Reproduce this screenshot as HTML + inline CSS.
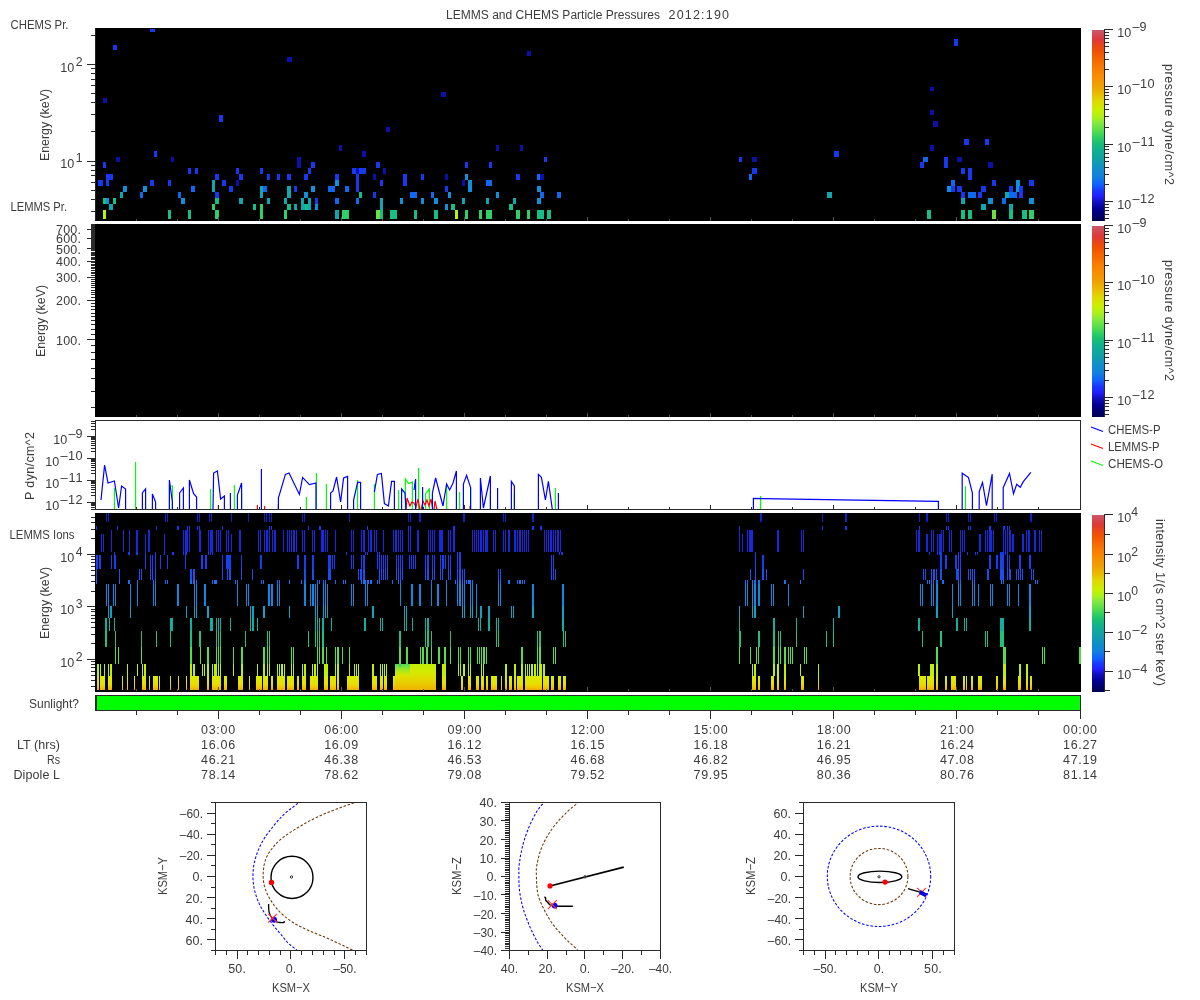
<!DOCTYPE html><html><head><meta charset="utf-8"><style>html,body{margin:0;padding:0;background:#fff;overflow:hidden}svg{display:block;will-change:transform}</style></head><body><svg width="1200" height="1000" viewBox="0 0 1200 1000" font-family='"Liberation Sans", sans-serif' shape-rendering="crispEdges">
<rect x="0" y="0" width="1200" height="1000" fill="#fff"/>
<text x="446" y="19" font-size="12.5" textLength="214" lengthAdjust="spacingAndGlyphs" fill="#3c3c3c">LEMMS and CHEMS Particle Pressures</text>
<text x="668.5" y="19" font-size="12.5" textLength="60.5" lengthAdjust="spacing" fill="#3c3c3c">2012:190</text>
<rect x="95" y="28" width="986" height="193" fill="#000"/>
<rect x="95" y="28" width="1" height="193" fill="#222"/>
<rect x="91" y="211" width="4" height="1" fill="#2a2a2a"/>
<rect x="91" y="199" width="4" height="1" fill="#2a2a2a"/>
<rect x="91" y="190" width="4" height="1" fill="#2a2a2a"/>
<rect x="91" y="182" width="4" height="1" fill="#2a2a2a"/>
<rect x="91" y="175" width="4" height="1" fill="#2a2a2a"/>
<rect x="91" y="170" width="4" height="1" fill="#2a2a2a"/>
<rect x="91" y="165" width="4" height="1" fill="#2a2a2a"/>
<rect x="91" y="131" width="4" height="1" fill="#2a2a2a"/>
<rect x="91" y="114" width="4" height="1" fill="#2a2a2a"/>
<rect x="91" y="102" width="4" height="1" fill="#2a2a2a"/>
<rect x="91" y="93" width="4" height="1" fill="#2a2a2a"/>
<rect x="91" y="85" width="4" height="1" fill="#2a2a2a"/>
<rect x="91" y="79" width="4" height="1" fill="#2a2a2a"/>
<rect x="91" y="73" width="4" height="1" fill="#2a2a2a"/>
<rect x="91" y="68" width="4" height="1" fill="#2a2a2a"/>
<rect x="91" y="35" width="4" height="1" fill="#2a2a2a"/>
<rect x="87" y="161" width="8" height="1" fill="#2a2a2a"/>
<rect x="87" y="64" width="8" height="1" fill="#2a2a2a"/>
<rect x="103" y="210" width="3" height="9" fill="#b8f018"/>
<rect x="168" y="210" width="3" height="9" fill="#14c088"/>
<rect x="188" y="210" width="3" height="9" fill="#14c088"/>
<rect x="109" y="204" width="4" height="6" fill="#10a8b0"/>
<rect x="103" y="198" width="3" height="6" fill="#14c088"/>
<rect x="106" y="198" width="3" height="6" fill="#1090d8"/>
<rect x="113" y="198" width="3" height="6" fill="#14c088"/>
<rect x="181" y="198" width="4" height="6" fill="#1090d8"/>
<rect x="120" y="192" width="3" height="6" fill="#10a8b0"/>
<rect x="140" y="192" width="3" height="6" fill="#1068f0"/>
<rect x="178" y="192" width="3" height="6" fill="#1068f0"/>
<rect x="123" y="186" width="4" height="6" fill="#1090d8"/>
<rect x="143" y="186" width="4" height="6" fill="#1090d8"/>
<rect x="191" y="186" width="4" height="6" fill="#1068f0"/>
<rect x="98" y="180" width="5" height="6" fill="#1838f0"/>
<rect x="106" y="180" width="3" height="6" fill="#1838f0"/>
<rect x="150" y="180" width="4" height="6" fill="#1838f0"/>
<rect x="168" y="180" width="3" height="6" fill="#1838f0"/>
<rect x="106" y="174" width="7" height="6" fill="#1838f0"/>
<rect x="188" y="168" width="3" height="6" fill="#1838f0"/>
<rect x="103" y="162" width="3" height="6" fill="#1838f0"/>
<rect x="116" y="157" width="4" height="5" fill="#0c10a8"/>
<rect x="171" y="157" width="3" height="5" fill="#0c10a8"/>
<rect x="154" y="151" width="3" height="6" fill="#1838f0"/>
<rect x="215" y="210" width="4" height="9" fill="#30d068"/>
<rect x="260" y="210" width="3" height="9" fill="#30d068"/>
<rect x="284" y="210" width="3" height="9" fill="#30d068"/>
<rect x="212" y="204" width="3" height="6" fill="#30d068"/>
<rect x="253" y="204" width="3" height="6" fill="#14c088"/>
<rect x="260" y="204" width="3" height="6" fill="#30d068"/>
<rect x="287" y="204" width="4" height="6" fill="#14c088"/>
<rect x="294" y="204" width="3" height="6" fill="#10a8b0"/>
<rect x="301" y="204" width="3" height="6" fill="#10a8b0"/>
<rect x="304" y="204" width="4" height="6" fill="#10a8b0"/>
<rect x="308" y="204" width="3" height="6" fill="#10a8b0"/>
<rect x="215" y="198" width="4" height="6" fill="#14c088"/>
<rect x="239" y="198" width="4" height="6" fill="#10a8b0"/>
<rect x="267" y="198" width="3" height="6" fill="#10a8b0"/>
<rect x="284" y="198" width="3" height="6" fill="#10a8b0"/>
<rect x="301" y="198" width="3" height="6" fill="#10a8b0"/>
<rect x="308" y="198" width="3" height="6" fill="#10a8b0"/>
<rect x="215" y="192" width="4" height="6" fill="#1838f0"/>
<rect x="260" y="192" width="3" height="6" fill="#10a8b0"/>
<rect x="287" y="192" width="4" height="6" fill="#10a8b0"/>
<rect x="304" y="192" width="4" height="6" fill="#1090d8"/>
<rect x="212" y="186" width="3" height="6" fill="#10a8b0"/>
<rect x="229" y="186" width="4" height="6" fill="#1838f0"/>
<rect x="260" y="186" width="3" height="6" fill="#10a8b0"/>
<rect x="263" y="186" width="4" height="6" fill="#1068f0"/>
<rect x="287" y="186" width="4" height="6" fill="#10a8b0"/>
<rect x="294" y="186" width="3" height="6" fill="#1838f0"/>
<rect x="212" y="180" width="3" height="6" fill="#10a8b0"/>
<rect x="222" y="180" width="4" height="6" fill="#1838f0"/>
<rect x="236" y="180" width="3" height="6" fill="#0c10a8"/>
<rect x="215" y="174" width="4" height="6" fill="#1838f0"/>
<rect x="239" y="174" width="4" height="6" fill="#1838f0"/>
<rect x="267" y="174" width="3" height="6" fill="#1838f0"/>
<rect x="277" y="174" width="3" height="6" fill="#1838f0"/>
<rect x="287" y="174" width="4" height="6" fill="#1838f0"/>
<rect x="304" y="174" width="4" height="6" fill="#1838f0"/>
<rect x="195" y="168" width="3" height="6" fill="#1838f0"/>
<rect x="236" y="168" width="3" height="6" fill="#1838f0"/>
<rect x="260" y="168" width="3" height="6" fill="#1838f0"/>
<rect x="308" y="168" width="3" height="6" fill="#1838f0"/>
<rect x="297" y="162" width="4" height="6" fill="#0c10a8"/>
<rect x="297" y="157" width="4" height="5" fill="#0c10a8"/>
<rect x="305" y="174" width="3" height="6" fill="#1838f0"/>
<rect x="305" y="192" width="3" height="6" fill="#1090d8"/>
<rect x="305" y="204" width="3" height="6" fill="#14c088"/>
<rect x="308" y="168" width="3" height="6" fill="#1838f0"/>
<rect x="308" y="198" width="3" height="6" fill="#10a8b0"/>
<rect x="311" y="162" width="4" height="6" fill="#1838f0"/>
<rect x="311" y="186" width="4" height="6" fill="#1090d8"/>
<rect x="315" y="198" width="3" height="6" fill="#1838f0"/>
<rect x="315" y="204" width="3" height="6" fill="#1090d8"/>
<rect x="328" y="186" width="7" height="6" fill="#1068f0"/>
<rect x="335" y="174" width="4" height="6" fill="#1838f0"/>
<rect x="335" y="180" width="4" height="6" fill="#1090d8"/>
<rect x="335" y="198" width="4" height="6" fill="#1068f0"/>
<rect x="335" y="210" width="4" height="9" fill="#10a8b0"/>
<rect x="339" y="145" width="3" height="6" fill="#0c10a8"/>
<rect x="342" y="210" width="7" height="9" fill="#30d068"/>
<rect x="345" y="186" width="4" height="6" fill="#1068f0"/>
<rect x="352" y="168" width="4" height="6" fill="#1838f0"/>
<rect x="356" y="168" width="3" height="6" fill="#0c10a8"/>
<rect x="356" y="174" width="3" height="6" fill="#1838f0"/>
<rect x="356" y="180" width="3" height="6" fill="#1838f0"/>
<rect x="356" y="186" width="3" height="6" fill="#1838f0"/>
<rect x="356" y="198" width="3" height="6" fill="#1068f0"/>
<rect x="359" y="192" width="3" height="6" fill="#14c088"/>
<rect x="359" y="168" width="7" height="6" fill="#1838f0"/>
<rect x="362" y="151" width="4" height="6" fill="#0c10a8"/>
<rect x="373" y="174" width="3" height="6" fill="#0c10a8"/>
<rect x="373" y="192" width="3" height="6" fill="#1838f0"/>
<rect x="376" y="162" width="4" height="6" fill="#1838f0"/>
<rect x="376" y="210" width="4" height="9" fill="#70e040"/>
<rect x="380" y="180" width="3" height="6" fill="#1838f0"/>
<rect x="380" y="198" width="3" height="6" fill="#10a8b0"/>
<rect x="380" y="204" width="3" height="6" fill="#10a8b0"/>
<rect x="380" y="210" width="3" height="9" fill="#14c088"/>
<rect x="383" y="168" width="3" height="6" fill="#0c10a8"/>
<rect x="390" y="210" width="7" height="9" fill="#14c088"/>
<rect x="400" y="198" width="3" height="6" fill="#1090d8"/>
<rect x="403" y="174" width="4" height="6" fill="#1838f0"/>
<rect x="403" y="180" width="4" height="6" fill="#1838f0"/>
<rect x="410" y="192" width="7" height="6" fill="#1068f0"/>
<rect x="414" y="210" width="3" height="9" fill="#14c088"/>
<rect x="421" y="174" width="3" height="6" fill="#1838f0"/>
<rect x="421" y="198" width="3" height="6" fill="#1090d8"/>
<rect x="431" y="192" width="3" height="6" fill="#1068f0"/>
<rect x="434" y="198" width="4" height="6" fill="#1090d8"/>
<rect x="434" y="210" width="4" height="9" fill="#14c088"/>
<rect x="445" y="174" width="3" height="6" fill="#0c10a8"/>
<rect x="445" y="186" width="3" height="6" fill="#1838f0"/>
<rect x="445" y="204" width="3" height="6" fill="#1090d8"/>
<rect x="448" y="192" width="3" height="6" fill="#1090d8"/>
<rect x="451" y="204" width="4" height="6" fill="#14c088"/>
<rect x="455" y="210" width="3" height="9" fill="#b8f018"/>
<rect x="462" y="180" width="3" height="6" fill="#0c10a8"/>
<rect x="462" y="198" width="3" height="6" fill="#10a8b0"/>
<rect x="465" y="162" width="3" height="6" fill="#1838f0"/>
<rect x="465" y="174" width="3" height="6" fill="#1090d8"/>
<rect x="465" y="210" width="3" height="9" fill="#30d068"/>
<rect x="468" y="180" width="4" height="6" fill="#1090d8"/>
<rect x="468" y="186" width="4" height="6" fill="#1090d8"/>
<rect x="479" y="210" width="3" height="9" fill="#30d068"/>
<rect x="486" y="180" width="6" height="6" fill="#1068f0"/>
<rect x="486" y="210" width="6" height="9" fill="#30d068"/>
<rect x="486" y="198" width="3" height="6" fill="#10a8b0"/>
<rect x="489" y="162" width="3" height="6" fill="#1838f0"/>
<rect x="496" y="145" width="3" height="6" fill="#0c10a8"/>
<rect x="496" y="192" width="3" height="6" fill="#1090d8"/>
<rect x="509" y="204" width="4" height="6" fill="#14c088"/>
<rect x="513" y="198" width="3" height="6" fill="#10a8b0"/>
<rect x="516" y="174" width="4" height="6" fill="#1838f0"/>
<rect x="516" y="210" width="4" height="9" fill="#30d068"/>
<rect x="520" y="145" width="3" height="6" fill="#0c10a8"/>
<rect x="527" y="210" width="3" height="9" fill="#30d068"/>
<rect x="537" y="174" width="4" height="6" fill="#1068f0"/>
<rect x="537" y="186" width="4" height="6" fill="#1090d8"/>
<rect x="537" y="198" width="4" height="6" fill="#1090d8"/>
<rect x="537" y="210" width="4" height="9" fill="#14c088"/>
<rect x="540" y="174" width="4" height="6" fill="#0c10a8"/>
<rect x="540" y="192" width="4" height="6" fill="#1068f0"/>
<rect x="540" y="210" width="4" height="9" fill="#14c088"/>
<rect x="544" y="157" width="3" height="5" fill="#1838f0"/>
<rect x="547" y="210" width="4" height="9" fill="#14c088"/>
<rect x="557" y="192" width="4" height="6" fill="#1068f0"/>
<rect x="739" y="157" width="3" height="5" fill="#1838f0"/>
<rect x="752" y="157" width="5" height="5" fill="#0c10a8"/>
<rect x="752" y="168" width="5" height="6" fill="#1838f0"/>
<rect x="749" y="174" width="3" height="6" fill="#1068f0"/>
<rect x="827" y="192" width="5" height="6" fill="#10a8b0"/>
<rect x="834" y="151" width="5" height="6" fill="#1838f0"/>
<rect x="920" y="162" width="4" height="6" fill="#1838f0"/>
<rect x="923" y="157" width="5" height="5" fill="#1068f0"/>
<rect x="927" y="210" width="4" height="9" fill="#14c088"/>
<rect x="930" y="145" width="4" height="6" fill="#0c10a8"/>
<rect x="944" y="157" width="4" height="5" fill="#1838f0"/>
<rect x="944" y="162" width="4" height="6" fill="#1838f0"/>
<rect x="947" y="186" width="5" height="6" fill="#1090d8"/>
<rect x="951" y="180" width="4" height="6" fill="#1068f0"/>
<rect x="951" y="186" width="4" height="6" fill="#1838f0"/>
<rect x="957" y="157" width="5" height="5" fill="#0c10a8"/>
<rect x="957" y="186" width="5" height="6" fill="#1838f0"/>
<rect x="961" y="168" width="4" height="6" fill="#1838f0"/>
<rect x="961" y="192" width="4" height="6" fill="#1838f0"/>
<rect x="961" y="198" width="4" height="6" fill="#10a8b0"/>
<rect x="961" y="210" width="4" height="9" fill="#14c088"/>
<rect x="964" y="139" width="5" height="6" fill="#1838f0"/>
<rect x="968" y="168" width="4" height="6" fill="#1838f0"/>
<rect x="968" y="174" width="4" height="6" fill="#1838f0"/>
<rect x="968" y="210" width="4" height="9" fill="#14c088"/>
<rect x="968" y="192" width="8" height="6" fill="#1068f0"/>
<rect x="978" y="192" width="4" height="6" fill="#1838f0"/>
<rect x="981" y="186" width="5" height="6" fill="#1838f0"/>
<rect x="981" y="204" width="5" height="6" fill="#10a8b0"/>
<rect x="985" y="139" width="4" height="6" fill="#1838f0"/>
<rect x="988" y="162" width="5" height="6" fill="#0c10a8"/>
<rect x="988" y="198" width="5" height="6" fill="#1090d8"/>
<rect x="992" y="180" width="4" height="6" fill="#1838f0"/>
<rect x="992" y="210" width="4" height="9" fill="#70e040"/>
<rect x="1002" y="198" width="4" height="6" fill="#1068f0"/>
<rect x="1005" y="192" width="5" height="6" fill="#10a8b0"/>
<rect x="1009" y="186" width="4" height="6" fill="#1838f0"/>
<rect x="1009" y="192" width="4" height="6" fill="#1068f0"/>
<rect x="1009" y="204" width="4" height="6" fill="#10a8b0"/>
<rect x="1009" y="210" width="4" height="9" fill="#14c088"/>
<rect x="1012" y="192" width="5" height="6" fill="#1068f0"/>
<rect x="1016" y="180" width="4" height="6" fill="#1090d8"/>
<rect x="1016" y="186" width="4" height="6" fill="#1090d8"/>
<rect x="1019" y="186" width="4" height="6" fill="#1838f0"/>
<rect x="1019" y="192" width="4" height="6" fill="#1838f0"/>
<rect x="1022" y="210" width="5" height="9" fill="#14c088"/>
<rect x="1029" y="180" width="5" height="6" fill="#1838f0"/>
<rect x="1029" y="198" width="5" height="6" fill="#1090d8"/>
<rect x="1029" y="210" width="5" height="9" fill="#30d068"/>
<rect x="150" y="29" width="5" height="3" fill="#1838f0"/>
<rect x="113" y="45" width="4" height="5" fill="#1838f0"/>
<rect x="287" y="57" width="5" height="5" fill="#0c10a8"/>
<rect x="103" y="98" width="4" height="5" fill="#0c10a8"/>
<rect x="219" y="115" width="4" height="7" fill="#1838f0"/>
<rect x="527" y="51" width="4" height="5" fill="#0c10a8"/>
<rect x="441" y="92" width="5" height="5" fill="#0c10a8"/>
<rect x="386" y="127" width="4" height="5" fill="#0c10a8"/>
<rect x="954" y="39" width="4" height="7" fill="#1838f0"/>
<rect x="930" y="87" width="4" height="4" fill="#0c10a8"/>
<rect x="930" y="110" width="4" height="5" fill="#0c10a8"/>
<rect x="933" y="121" width="5" height="6" fill="#0c10a8"/>
<text x="10.5" y="29" font-size="12.5" textLength="58" lengthAdjust="spacingAndGlyphs" fill="#3c3c3c">CHEMS Pr.</text>
<text x="10.5" y="211" font-size="12.5" textLength="56.5" lengthAdjust="spacingAndGlyphs" fill="#3c3c3c">LEMMS Pr.</text>
<defs>
<linearGradient id="cm" x1="0" y1="0" x2="0" y2="1"><stop offset="0" stop-color="#c85a6a"/><stop offset="0.052" stop-color="#e03838"/><stop offset="0.11" stop-color="#f05000"/><stop offset="0.19" stop-color="#f87800"/><stop offset="0.24" stop-color="#f88c00"/><stop offset="0.29" stop-color="#f0a000"/><stop offset="0.34" stop-color="#e8c000"/><stop offset="0.37" stop-color="#e0d800"/><stop offset="0.42" stop-color="#c8f000"/><stop offset="0.46" stop-color="#a8f020"/><stop offset="0.49" stop-color="#80e840"/><stop offset="0.52" stop-color="#60e048"/><stop offset="0.56" stop-color="#30d060"/><stop offset="0.59" stop-color="#18c070"/><stop offset="0.63" stop-color="#10b090"/><stop offset="0.68" stop-color="#10a0a8"/><stop offset="0.72" stop-color="#1090c8"/><stop offset="0.77" stop-color="#1080e0"/><stop offset="0.81" stop-color="#1060ff"/><stop offset="0.84" stop-color="#1838ff"/><stop offset="0.87" stop-color="#2020ff"/><stop offset="0.9" stop-color="#1010c0"/><stop offset="0.94" stop-color="#000090"/><stop offset="1" stop-color="#000050"/></linearGradient>
</defs>
<rect x="1092" y="30" width="12" height="191" fill="url(#cm)"/>
<rect x="1104" y="29" width="1" height="192" fill="#2a2a2a"/>
<rect x="1105" y="218" width="4" height="1" fill="#2a2a2a"/>
<rect x="1105" y="214" width="4" height="1" fill="#2a2a2a"/>
<rect x="1105" y="210" width="4" height="1" fill="#2a2a2a"/>
<rect x="1105" y="207" width="4" height="1" fill="#2a2a2a"/>
<rect x="1105" y="204" width="4" height="1" fill="#2a2a2a"/>
<rect x="1105" y="201" width="8" height="1" fill="#2a2a2a"/>
<rect x="1105" y="184" width="4" height="1" fill="#2a2a2a"/>
<rect x="1105" y="174" width="4" height="1" fill="#2a2a2a"/>
<rect x="1105" y="167" width="4" height="1" fill="#2a2a2a"/>
<rect x="1105" y="161" width="4" height="1" fill="#2a2a2a"/>
<rect x="1105" y="157" width="4" height="1" fill="#2a2a2a"/>
<rect x="1105" y="153" width="4" height="1" fill="#2a2a2a"/>
<rect x="1105" y="149" width="4" height="1" fill="#2a2a2a"/>
<rect x="1105" y="146" width="4" height="1" fill="#2a2a2a"/>
<rect x="1105" y="144" width="8" height="1" fill="#2a2a2a"/>
<rect x="1105" y="127" width="4" height="1" fill="#2a2a2a"/>
<rect x="1105" y="116" width="4" height="1" fill="#2a2a2a"/>
<rect x="1105" y="109" width="4" height="1" fill="#2a2a2a"/>
<rect x="1105" y="104" width="4" height="1" fill="#2a2a2a"/>
<rect x="1105" y="99" width="4" height="1" fill="#2a2a2a"/>
<rect x="1105" y="95" width="4" height="1" fill="#2a2a2a"/>
<rect x="1105" y="92" width="4" height="1" fill="#2a2a2a"/>
<rect x="1105" y="89" width="4" height="1" fill="#2a2a2a"/>
<rect x="1105" y="86" width="8" height="1" fill="#2a2a2a"/>
<rect x="1105" y="69" width="4" height="1" fill="#2a2a2a"/>
<rect x="1105" y="59" width="4" height="1" fill="#2a2a2a"/>
<rect x="1105" y="52" width="4" height="1" fill="#2a2a2a"/>
<rect x="1105" y="46" width="4" height="1" fill="#2a2a2a"/>
<rect x="1105" y="42" width="4" height="1" fill="#2a2a2a"/>
<rect x="1105" y="38" width="4" height="1" fill="#2a2a2a"/>
<rect x="1105" y="35" width="4" height="1" fill="#2a2a2a"/>
<rect x="1105" y="32" width="4" height="1" fill="#2a2a2a"/>
<rect x="1105" y="29" width="8" height="1" fill="#2a2a2a"/>
<text x="1117.3" y="36.9" font-size="12.7" textLength="14" lengthAdjust="spacingAndGlyphs" fill="#3c3c3c">10</text>
<text x="1132.5" y="30.9" font-size="12.7" textLength="14" lengthAdjust="spacingAndGlyphs" fill="#3c3c3c">&#8211;9</text>
<text x="1117.3" y="94.30000000000001" font-size="12.7" textLength="14" lengthAdjust="spacingAndGlyphs" fill="#3c3c3c">10</text>
<text x="1132.5" y="88.30000000000001" font-size="12.7" textLength="22" lengthAdjust="spacing" fill="#3c3c3c">&#8211;10</text>
<text x="1117.3" y="151.70000000000002" font-size="12.7" textLength="14" lengthAdjust="spacingAndGlyphs" fill="#3c3c3c">10</text>
<text x="1132.5" y="145.70000000000002" font-size="12.7" textLength="22" lengthAdjust="spacing" fill="#3c3c3c">&#8211;11</text>
<text x="1117.3" y="209.1" font-size="12.7" textLength="14" lengthAdjust="spacingAndGlyphs" fill="#3c3c3c">10</text>
<text x="1132.5" y="203.1" font-size="12.7" textLength="22" lengthAdjust="spacing" fill="#3c3c3c">&#8211;12</text>
<text x="1165" y="64" font-size="12.5" textLength="121" lengthAdjust="spacing" transform="rotate(90 1165 64)" fill="#3c3c3c">pressure dyne/cm^2</text>
<rect x="95" y="224" width="986" height="193" fill="#000"/>
<rect x="91" y="407" width="4" height="1" fill="#2a2a2a"/>
<rect x="91" y="391" width="4" height="1" fill="#2a2a2a"/>
<rect x="91" y="378" width="4" height="1" fill="#2a2a2a"/>
<rect x="91" y="368" width="4" height="1" fill="#2a2a2a"/>
<rect x="91" y="359" width="4" height="1" fill="#2a2a2a"/>
<rect x="91" y="352" width="4" height="1" fill="#2a2a2a"/>
<rect x="91" y="345" width="4" height="1" fill="#2a2a2a"/>
<rect x="91" y="334" width="4" height="1" fill="#2a2a2a"/>
<rect x="91" y="329" width="4" height="1" fill="#2a2a2a"/>
<rect x="91" y="324" width="4" height="1" fill="#2a2a2a"/>
<rect x="91" y="320" width="4" height="1" fill="#2a2a2a"/>
<rect x="91" y="316" width="4" height="1" fill="#2a2a2a"/>
<rect x="91" y="313" width="4" height="1" fill="#2a2a2a"/>
<rect x="91" y="309" width="4" height="1" fill="#2a2a2a"/>
<rect x="91" y="306" width="4" height="1" fill="#2a2a2a"/>
<rect x="91" y="303" width="4" height="1" fill="#2a2a2a"/>
<rect x="91" y="297" width="4" height="1" fill="#2a2a2a"/>
<rect x="91" y="294" width="4" height="1" fill="#2a2a2a"/>
<rect x="91" y="292" width="4" height="1" fill="#2a2a2a"/>
<rect x="91" y="290" width="4" height="1" fill="#2a2a2a"/>
<rect x="91" y="287" width="4" height="1" fill="#2a2a2a"/>
<rect x="91" y="285" width="4" height="1" fill="#2a2a2a"/>
<rect x="91" y="283" width="4" height="1" fill="#2a2a2a"/>
<rect x="91" y="281" width="4" height="1" fill="#2a2a2a"/>
<rect x="91" y="279" width="4" height="1" fill="#2a2a2a"/>
<rect x="91" y="275" width="4" height="1" fill="#2a2a2a"/>
<rect x="91" y="273" width="4" height="1" fill="#2a2a2a"/>
<rect x="91" y="272" width="4" height="1" fill="#2a2a2a"/>
<rect x="91" y="270" width="4" height="1" fill="#2a2a2a"/>
<rect x="91" y="268" width="4" height="1" fill="#2a2a2a"/>
<rect x="91" y="267" width="4" height="1" fill="#2a2a2a"/>
<rect x="91" y="265" width="4" height="1" fill="#2a2a2a"/>
<rect x="91" y="264" width="4" height="1" fill="#2a2a2a"/>
<rect x="91" y="262" width="4" height="1" fill="#2a2a2a"/>
<rect x="91" y="259" width="4" height="1" fill="#2a2a2a"/>
<rect x="91" y="258" width="4" height="1" fill="#2a2a2a"/>
<rect x="91" y="257" width="4" height="1" fill="#2a2a2a"/>
<rect x="91" y="255" width="4" height="1" fill="#2a2a2a"/>
<rect x="91" y="254" width="4" height="1" fill="#2a2a2a"/>
<rect x="91" y="253" width="4" height="1" fill="#2a2a2a"/>
<rect x="91" y="252" width="4" height="1" fill="#2a2a2a"/>
<rect x="91" y="250" width="4" height="1" fill="#2a2a2a"/>
<rect x="91" y="249" width="4" height="1" fill="#2a2a2a"/>
<rect x="91" y="247" width="4" height="1" fill="#2a2a2a"/>
<rect x="91" y="246" width="4" height="1" fill="#2a2a2a"/>
<rect x="91" y="245" width="4" height="1" fill="#2a2a2a"/>
<rect x="91" y="244" width="4" height="1" fill="#2a2a2a"/>
<rect x="91" y="243" width="4" height="1" fill="#2a2a2a"/>
<rect x="91" y="242" width="4" height="1" fill="#2a2a2a"/>
<rect x="91" y="241" width="4" height="1" fill="#2a2a2a"/>
<rect x="91" y="240" width="4" height="1" fill="#2a2a2a"/>
<rect x="91" y="239" width="4" height="1" fill="#2a2a2a"/>
<rect x="91" y="237" width="4" height="1" fill="#2a2a2a"/>
<rect x="91" y="236" width="4" height="1" fill="#2a2a2a"/>
<rect x="91" y="235" width="4" height="1" fill="#2a2a2a"/>
<rect x="91" y="234" width="4" height="1" fill="#2a2a2a"/>
<rect x="91" y="233" width="4" height="1" fill="#2a2a2a"/>
<rect x="91" y="232" width="4" height="1" fill="#2a2a2a"/>
<rect x="91" y="231" width="4" height="1" fill="#2a2a2a"/>
<rect x="91" y="231" width="4" height="1" fill="#2a2a2a"/>
<rect x="91" y="230" width="4" height="1" fill="#2a2a2a"/>
<rect x="91" y="228" width="4" height="1" fill="#2a2a2a"/>
<rect x="91" y="227" width="4" height="1" fill="#2a2a2a"/>
<rect x="91" y="227" width="4" height="1" fill="#2a2a2a"/>
<rect x="91" y="226" width="4" height="1" fill="#2a2a2a"/>
<rect x="91" y="225" width="4" height="1" fill="#2a2a2a"/>
<rect x="91" y="224" width="4" height="1" fill="#2a2a2a"/>
<rect x="91" y="224" width="4" height="1" fill="#2a2a2a"/>
<rect x="87" y="339" width="8" height="1" fill="#2a2a2a"/>
<rect x="87" y="300" width="8" height="1" fill="#2a2a2a"/>
<rect x="87" y="277" width="8" height="1" fill="#2a2a2a"/>
<rect x="87" y="261" width="8" height="1" fill="#2a2a2a"/>
<rect x="87" y="248" width="8" height="1" fill="#2a2a2a"/>
<rect x="87" y="238" width="8" height="1" fill="#2a2a2a"/>
<rect x="87" y="229" width="8" height="1" fill="#2a2a2a"/>
<text x="81" y="234" font-size="12.5" text-anchor="end" textLength="25" lengthAdjust="spacing" fill="#3c3c3c">700.</text>
<text x="81" y="243" font-size="12.5" text-anchor="end" textLength="25" lengthAdjust="spacing" fill="#3c3c3c">600.</text>
<text x="81" y="254" font-size="12.5" text-anchor="end" textLength="25" lengthAdjust="spacing" fill="#3c3c3c">500.</text>
<text x="81" y="266" font-size="12.5" text-anchor="end" textLength="25" lengthAdjust="spacing" fill="#3c3c3c">400.</text>
<text x="81" y="282" font-size="12.5" text-anchor="end" textLength="25" lengthAdjust="spacing" fill="#3c3c3c">300.</text>
<text x="81" y="305" font-size="12.5" text-anchor="end" textLength="25" lengthAdjust="spacing" fill="#3c3c3c">200.</text>
<text x="81" y="345" font-size="12.5" text-anchor="end" textLength="25" lengthAdjust="spacing" fill="#3c3c3c">100.</text>
<text x="45.3" y="357" font-size="12.5" textLength="72" lengthAdjust="spacingAndGlyphs" transform="rotate(-90 45.3 357)" fill="#3c3c3c">Energy (keV)</text>
<rect x="1092" y="226" width="12" height="191" fill="url(#cm)"/>
<rect x="1104" y="225" width="1" height="192" fill="#2a2a2a"/>
<rect x="1105" y="414" width="4" height="1" fill="#2a2a2a"/>
<rect x="1105" y="410" width="4" height="1" fill="#2a2a2a"/>
<rect x="1105" y="406" width="4" height="1" fill="#2a2a2a"/>
<rect x="1105" y="403" width="4" height="1" fill="#2a2a2a"/>
<rect x="1105" y="400" width="4" height="1" fill="#2a2a2a"/>
<rect x="1105" y="397" width="8" height="1" fill="#2a2a2a"/>
<rect x="1105" y="380" width="4" height="1" fill="#2a2a2a"/>
<rect x="1105" y="370" width="4" height="1" fill="#2a2a2a"/>
<rect x="1105" y="363" width="4" height="1" fill="#2a2a2a"/>
<rect x="1105" y="357" width="4" height="1" fill="#2a2a2a"/>
<rect x="1105" y="353" width="4" height="1" fill="#2a2a2a"/>
<rect x="1105" y="349" width="4" height="1" fill="#2a2a2a"/>
<rect x="1105" y="345" width="4" height="1" fill="#2a2a2a"/>
<rect x="1105" y="342" width="4" height="1" fill="#2a2a2a"/>
<rect x="1105" y="340" width="8" height="1" fill="#2a2a2a"/>
<rect x="1105" y="323" width="4" height="1" fill="#2a2a2a"/>
<rect x="1105" y="312" width="4" height="1" fill="#2a2a2a"/>
<rect x="1105" y="305" width="4" height="1" fill="#2a2a2a"/>
<rect x="1105" y="300" width="4" height="1" fill="#2a2a2a"/>
<rect x="1105" y="295" width="4" height="1" fill="#2a2a2a"/>
<rect x="1105" y="291" width="4" height="1" fill="#2a2a2a"/>
<rect x="1105" y="288" width="4" height="1" fill="#2a2a2a"/>
<rect x="1105" y="285" width="4" height="1" fill="#2a2a2a"/>
<rect x="1105" y="282" width="8" height="1" fill="#2a2a2a"/>
<rect x="1105" y="265" width="4" height="1" fill="#2a2a2a"/>
<rect x="1105" y="255" width="4" height="1" fill="#2a2a2a"/>
<rect x="1105" y="248" width="4" height="1" fill="#2a2a2a"/>
<rect x="1105" y="242" width="4" height="1" fill="#2a2a2a"/>
<rect x="1105" y="238" width="4" height="1" fill="#2a2a2a"/>
<rect x="1105" y="234" width="4" height="1" fill="#2a2a2a"/>
<rect x="1105" y="231" width="4" height="1" fill="#2a2a2a"/>
<rect x="1105" y="228" width="4" height="1" fill="#2a2a2a"/>
<rect x="1105" y="225" width="8" height="1" fill="#2a2a2a"/>
<text x="1117.3" y="232.9" font-size="12.7" textLength="14" lengthAdjust="spacingAndGlyphs" fill="#3c3c3c">10</text>
<text x="1132.5" y="226.9" font-size="12.7" textLength="14" lengthAdjust="spacingAndGlyphs" fill="#3c3c3c">&#8211;9</text>
<text x="1117.3" y="290.29999999999995" font-size="12.7" textLength="14" lengthAdjust="spacingAndGlyphs" fill="#3c3c3c">10</text>
<text x="1132.5" y="284.29999999999995" font-size="12.7" textLength="22" lengthAdjust="spacing" fill="#3c3c3c">&#8211;10</text>
<text x="1117.3" y="347.7" font-size="12.7" textLength="14" lengthAdjust="spacingAndGlyphs" fill="#3c3c3c">10</text>
<text x="1132.5" y="341.7" font-size="12.7" textLength="22" lengthAdjust="spacing" fill="#3c3c3c">&#8211;11</text>
<text x="1117.3" y="405.09999999999997" font-size="12.7" textLength="14" lengthAdjust="spacingAndGlyphs" fill="#3c3c3c">10</text>
<text x="1132.5" y="399.09999999999997" font-size="12.7" textLength="22" lengthAdjust="spacing" fill="#3c3c3c">&#8211;12</text>
<text x="1165" y="260" font-size="12.5" textLength="121" lengthAdjust="spacing" transform="rotate(90 1165 260)" fill="#3c3c3c">pressure dyne/cm^2</text>
<rect x="95.5" y="420.5" width="985" height="89" fill="#fff" stroke="#2a2a2a" stroke-width="1"/>
<rect x="91" y="509" width="4" height="1" fill="#2a2a2a"/>
<rect x="91" y="507" width="4" height="1" fill="#2a2a2a"/>
<rect x="91" y="505" width="4" height="1" fill="#2a2a2a"/>
<rect x="91" y="504" width="4" height="1" fill="#2a2a2a"/>
<rect x="91" y="503" width="4" height="1" fill="#2a2a2a"/>
<rect x="87" y="502" width="8" height="1" fill="#2a2a2a"/>
<rect x="91" y="495" width="4" height="1" fill="#2a2a2a"/>
<rect x="91" y="492" width="4" height="1" fill="#2a2a2a"/>
<rect x="91" y="489" width="4" height="1" fill="#2a2a2a"/>
<rect x="91" y="487" width="4" height="1" fill="#2a2a2a"/>
<rect x="91" y="485" width="4" height="1" fill="#2a2a2a"/>
<rect x="91" y="483" width="4" height="1" fill="#2a2a2a"/>
<rect x="91" y="482" width="4" height="1" fill="#2a2a2a"/>
<rect x="91" y="481" width="4" height="1" fill="#2a2a2a"/>
<rect x="87" y="480" width="8" height="1" fill="#2a2a2a"/>
<rect x="91" y="473" width="4" height="1" fill="#2a2a2a"/>
<rect x="91" y="470" width="4" height="1" fill="#2a2a2a"/>
<rect x="91" y="467" width="4" height="1" fill="#2a2a2a"/>
<rect x="91" y="465" width="4" height="1" fill="#2a2a2a"/>
<rect x="91" y="463" width="4" height="1" fill="#2a2a2a"/>
<rect x="91" y="461" width="4" height="1" fill="#2a2a2a"/>
<rect x="91" y="460" width="4" height="1" fill="#2a2a2a"/>
<rect x="91" y="459" width="4" height="1" fill="#2a2a2a"/>
<rect x="87" y="458" width="8" height="1" fill="#2a2a2a"/>
<rect x="91" y="451" width="4" height="1" fill="#2a2a2a"/>
<rect x="91" y="448" width="4" height="1" fill="#2a2a2a"/>
<rect x="91" y="445" width="4" height="1" fill="#2a2a2a"/>
<rect x="91" y="443" width="4" height="1" fill="#2a2a2a"/>
<rect x="91" y="441" width="4" height="1" fill="#2a2a2a"/>
<rect x="91" y="439" width="4" height="1" fill="#2a2a2a"/>
<rect x="91" y="438" width="4" height="1" fill="#2a2a2a"/>
<rect x="91" y="437" width="4" height="1" fill="#2a2a2a"/>
<rect x="87" y="436" width="8" height="1" fill="#2a2a2a"/>
<rect x="91" y="429" width="4" height="1" fill="#2a2a2a"/>
<rect x="91" y="426" width="4" height="1" fill="#2a2a2a"/>
<rect x="91" y="423" width="4" height="1" fill="#2a2a2a"/>
<rect x="91" y="421" width="4" height="1" fill="#2a2a2a"/>
<text x="53.3" y="443.9" font-size="12.7" textLength="14" lengthAdjust="spacingAndGlyphs" fill="#3c3c3c">10</text>
<text x="68.5" y="437.9" font-size="12.7" textLength="14" lengthAdjust="spacingAndGlyphs" fill="#3c3c3c">&#8211;9</text>
<text x="45.3" y="465.9" font-size="12.7" textLength="14" lengthAdjust="spacingAndGlyphs" fill="#3c3c3c">10</text>
<text x="60.5" y="459.9" font-size="12.7" textLength="22" lengthAdjust="spacing" fill="#3c3c3c">&#8211;10</text>
<text x="45.3" y="487.9" font-size="12.7" textLength="14" lengthAdjust="spacingAndGlyphs" fill="#3c3c3c">10</text>
<text x="60.5" y="481.9" font-size="12.7" textLength="22" lengthAdjust="spacing" fill="#3c3c3c">&#8211;11</text>
<text x="45.3" y="509.9" font-size="12.7" textLength="14" lengthAdjust="spacingAndGlyphs" fill="#3c3c3c">10</text>
<text x="60.5" y="503.9" font-size="12.7" textLength="22" lengthAdjust="spacing" fill="#3c3c3c">&#8211;12</text>
<text x="34" y="500" font-size="12.5" textLength="68" lengthAdjust="spacing" transform="rotate(-90 34 500)" fill="#3c3c3c">P dyn/cm^2</text>
<clipPath id="cp3"><rect x="96" y="421" width="984" height="88"/></clipPath>
<g clip-path="url(#cp3)" fill="none" stroke-linejoin="miter" shape-rendering="geometricPrecision">
<polyline points="169.4,510 169.4,486 172.4,486 172.4,510" stroke="#00ff00" stroke-width="1.2"/>
<polyline points="405.4,510 405.4,479 408.6,483.6 412.4,482 412.4,510" stroke="#00ff00" stroke-width="1.2"/>
<polyline points="425.6,510 425.6,493.6 429.4,489 429.4,510" stroke="#00ff00" stroke-width="1.2"/>
<line x1="114.4" y1="488" x2="114.4" y2="510" stroke="#00ff00" stroke-width="1.2"/>
<line x1="135.6" y1="462" x2="135.6" y2="510" stroke="#00ff00" stroke-width="1.2"/>
<line x1="210.6" y1="489" x2="210.6" y2="510" stroke="#00ff00" stroke-width="1.2"/>
<line x1="234.4" y1="485" x2="234.4" y2="510" stroke="#00ff00" stroke-width="1.2"/>
<line x1="241.6" y1="493" x2="241.6" y2="510" stroke="#00ff00" stroke-width="1.2"/>
<line x1="306.4" y1="497" x2="306.4" y2="510" stroke="#00ff00" stroke-width="1.2"/>
<line x1="316.4" y1="473" x2="316.4" y2="510" stroke="#00ff00" stroke-width="1.2"/>
<line x1="326.4" y1="484" x2="326.4" y2="510" stroke="#00ff00" stroke-width="1.2"/>
<line x1="357.6" y1="480" x2="357.6" y2="510" stroke="#00ff00" stroke-width="1.2"/>
<line x1="374.4" y1="484" x2="374.4" y2="510" stroke="#00ff00" stroke-width="1.2"/>
<line x1="398.6" y1="490" x2="398.6" y2="510" stroke="#00ff00" stroke-width="1.2"/>
<line x1="418.6" y1="468" x2="418.6" y2="510" stroke="#00ff00" stroke-width="1.2"/>
<line x1="446.6" y1="486" x2="446.6" y2="510" stroke="#00ff00" stroke-width="1.2"/>
<line x1="459.6" y1="492" x2="459.6" y2="510" stroke="#00ff00" stroke-width="1.2"/>
<line x1="470.6" y1="487.6" x2="470.6" y2="510" stroke="#00ff00" stroke-width="1.2"/>
<line x1="490.4" y1="493" x2="490.4" y2="510" stroke="#00ff00" stroke-width="1.2"/>
<line x1="514.4" y1="493" x2="514.4" y2="510" stroke="#00ff00" stroke-width="1.2"/>
<line x1="555.4" y1="488" x2="555.4" y2="510" stroke="#00ff00" stroke-width="1.2"/>
<line x1="760.6" y1="496" x2="760.6" y2="510" stroke="#00ff00" stroke-width="1.2"/>
<line x1="965.5" y1="486.2" x2="965.5" y2="510" stroke="#00ff00" stroke-width="1.2"/>
<line x1="218.4" y1="505" x2="218.4" y2="510" stroke="#ff0000" stroke-width="1.2"/>
<line x1="257.4" y1="505" x2="257.4" y2="510" stroke="#ff0000" stroke-width="1.2"/>
<line x1="264.6" y1="506" x2="264.6" y2="510" stroke="#ff0000" stroke-width="1.2"/>
<line x1="278.4" y1="504" x2="278.4" y2="510" stroke="#ff0000" stroke-width="1.2"/>
<line x1="470" y1="506" x2="470" y2="510" stroke="#ff0000" stroke-width="1.2"/>
<polyline points="406,510 407,498 410,506 412,502 414,503 416,507 418,499 420,510" stroke="#ff0000" stroke-width="1.2"/>
<polyline points="421,510 423,501 425,505 427,500 429,506 431,499 433,510" stroke="#ff0000" stroke-width="1.2"/>
<polyline points="434,510 435,501 437,510" stroke="#ff0000" stroke-width="1.2"/>
<polyline points="101,500 104.6,465 108,483 114.4,481 118.6,508 121.6,486 125.6,489 125.6,510" stroke="#0000ff" stroke-width="1.2"/>
<polyline points="142.4,510 142.4,493 145.6,489 145.6,510" stroke="#0000ff" stroke-width="1.2"/>
<polyline points="152.4,510 152.4,494 155.6,502 155.6,510" stroke="#0000ff" stroke-width="1.2"/>
<polyline points="169.4,510 169.4,480 172.4,502 172.4,510" stroke="#0000ff" stroke-width="1.2"/>
<polyline points="179.6,510 179.6,493 183.4,488 183.4,510" stroke="#0000ff" stroke-width="1.2"/>
<polyline points="189.4,510 189.4,480 193.6,493.6 196.6,497 196.6,510" stroke="#0000ff" stroke-width="1.2"/>
<polyline points="213,510 213.6,473 217.4,471 220.6,499 224.4,496 224.4,510" stroke="#0000ff" stroke-width="1.2"/>
<polyline points="230.4,510 230.4,493" stroke="#0000ff" stroke-width="1.2"/>
<polyline points="237.4,510 237.4,495 241.6,483 241.6,510" stroke="#0000ff" stroke-width="1.2"/>
<polyline points="261.4,510 261.4,469" stroke="#0000ff" stroke-width="1.2"/>
<polyline points="278.4,510 278.4,498 285.4,474.4 289,473 299.4,494.4 302.6,477.4 309.4,484.6 316,483 316,510" stroke="#0000ff" stroke-width="1.2"/>
<polyline points="330.6,510 330.6,493 333,491 336.6,477 340.6,502 343.6,478 347.6,476.4 347.6,510" stroke="#0000ff" stroke-width="1.2"/>
<polyline points="353.6,510 353.6,500 357.6,482.4 360.6,482.4 360.6,510" stroke="#0000ff" stroke-width="1.2"/>
<polyline points="374.4,492 377.4,474.4 381.4,473.4 384.4,503.6 388.4,506 391.6,481.4 394.4,481.4 394.4,510" stroke="#0000ff" stroke-width="1.2"/>
<polyline points="401.6,510 401.6,489 405,493 406,510" stroke="#0000ff" stroke-width="1.2"/>
<polyline points="415.6,510 415.6,479 414,490" stroke="#0000ff" stroke-width="1.2"/>
<polyline points="422.6,510 422.6,487" stroke="#0000ff" stroke-width="1.2"/>
<polyline points="432.4,510 432.4,493 435.6,478 443,506 446.6,484 449.6,490 453,483 456.4,471 456.4,510" stroke="#0000ff" stroke-width="1.2"/>
<polyline points="463.4,510 463.4,484 466.6,475.4 470.6,487.6 470.6,510" stroke="#0000ff" stroke-width="1.2"/>
<polyline points="480.4,510 480.4,478 483.4,508 490.4,476 490.4,510" stroke="#0000ff" stroke-width="1.2"/>
<polyline points="497.6,510 497.6,488" stroke="#0000ff" stroke-width="1.2"/>
<polyline points="511.4,510 511.4,481.4 514.4,486 514.4,510" stroke="#0000ff" stroke-width="1.2"/>
<polyline points="538.4,510 538.4,474.4 541.4,477.4 545.4,500 548.4,481.4 552.4,510" stroke="#0000ff" stroke-width="1.2"/>
<polyline points="558.4,510 558.4,493" stroke="#0000ff" stroke-width="1.2"/>
<polyline points="753.4,510 753.4,498.4 938.4,501.4 938.4,510" stroke="#0000ff" stroke-width="1.2"/>
<polyline points="962.2,510 962.2,473.2 968.5,477.5 972.4,493 972.4,510" stroke="#0000ff" stroke-width="1.2"/>
<polyline points="979.2,510 979.2,491.5 982.5,482.5 986.5,505.7 992.2,474.2 992.2,510" stroke="#0000ff" stroke-width="1.2"/>
<polyline points="1003.2,510 1003.2,487.7 1009.5,473.5 1013.5,493.7 1016.7,484.3 1020.3,487.3 1023.3,481.7 1030.8,472.3" stroke="#0000ff" stroke-width="1.2"/>
</g>
<line x1="1091" y1="427" x2="1103" y2="431.5" stroke="#0000ff" stroke-width="1.3" shape-rendering="geometricPrecision"/>
<text x="1108" y="434" font-size="12.5" textLength="52.5" lengthAdjust="spacingAndGlyphs" fill="#3c3c3c">CHEMS-P</text>
<line x1="1091" y1="444" x2="1103" y2="448.5" stroke="#ff0000" stroke-width="1.3" shape-rendering="geometricPrecision"/>
<text x="1108" y="451" font-size="12.5" textLength="51.5" lengthAdjust="spacingAndGlyphs" fill="#3c3c3c">LEMMS-P</text>
<line x1="1091" y1="461" x2="1103" y2="465.5" stroke="#00ff00" stroke-width="1.3" shape-rendering="geometricPrecision"/>
<text x="1108" y="468" font-size="12.5" textLength="55" lengthAdjust="spacingAndGlyphs" fill="#3c3c3c">CHEMS-O</text>
<rect x="95" y="513" width="986" height="179" fill="#000"/>
<linearGradient id="yo" x1="0" y1="0" x2="0" y2="1"><stop offset="0" stop-color="#d8ec00"/><stop offset="0.55" stop-color="#e8e000"/><stop offset="0.8" stop-color="#f0c800"/><stop offset="1" stop-color="#f0a800"/></linearGradient>
<rect x="96" y="526" width="1" height="4" fill="#1838f0"/>
<rect x="96" y="555" width="1" height="14" fill="#1840f0"/>
<rect x="96" y="569" width="1" height="11" fill="#1850f0"/>
<rect x="96" y="580" width="1" height="4" fill="#1870f0"/>
<rect x="97" y="555" width="1" height="14" fill="#1840f0"/>
<rect x="99" y="555" width="1" height="14" fill="#1840f0"/>
<rect x="100" y="555" width="1" height="14" fill="#1840f0"/>
<rect x="97" y="664" width="2" height="12" fill="#c0f000"/>
<rect x="97" y="676" width="2" height="14" fill="url(#yo)"/>
<rect x="100" y="664" width="1" height="12" fill="#c0f000"/>
<rect x="100" y="676" width="1" height="14" fill="url(#yo)"/>
<rect x="101" y="534" width="1" height="18" fill="#1828dc"/>
<rect x="103" y="534" width="1" height="18" fill="#1828dc"/>
<rect x="101" y="676" width="3" height="14" fill="url(#yo)"/>
<rect x="104" y="664" width="1" height="12" fill="#c0f000"/>
<rect x="104" y="676" width="1" height="14" fill="url(#yo)"/>
<rect x="105" y="618" width="2" height="13" fill="#10b0a0"/>
<rect x="105" y="631" width="2" height="16" fill="#20c080"/>
<rect x="106" y="513" width="1" height="9" fill="#1020c8"/>
<rect x="108" y="513" width="1" height="9" fill="#1020c8"/>
<rect x="106" y="584" width="1" height="22" fill="#1088e0"/>
<rect x="108" y="584" width="1" height="22" fill="#1088e0"/>
<rect x="108" y="606" width="1" height="12" fill="#10a0c0"/>
<rect x="110" y="606" width="1" height="12" fill="#10a0c0"/>
<rect x="111" y="606" width="1" height="12" fill="#10a0c0"/>
<rect x="108" y="664" width="1" height="12" fill="#c0f000"/>
<rect x="110" y="664" width="1" height="12" fill="#c0f000"/>
<rect x="111" y="664" width="1" height="12" fill="#c0f000"/>
<rect x="108" y="676" width="4" height="14" fill="url(#yo)"/>
<rect x="109" y="618" width="1" height="13" fill="#10b0a0"/>
<rect x="111" y="530" width="1" height="22" fill="#1828dc"/>
<rect x="111" y="555" width="1" height="14" fill="#1840f0"/>
<rect x="114" y="618" width="1" height="13" fill="#10b0a0"/>
<rect x="114" y="552" width="1" height="3" fill="#1838f0"/>
<rect x="114" y="555" width="1" height="14" fill="#1840f0"/>
<rect x="115" y="555" width="1" height="14" fill="#1840f0"/>
<rect x="115" y="631" width="1" height="16" fill="#20c080"/>
<rect x="115" y="647" width="1" height="17" fill="#58dc48"/>
<rect x="113" y="584" width="1" height="22" fill="#1088e0"/>
<rect x="115" y="584" width="1" height="22" fill="#1088e0"/>
<rect x="117" y="526" width="1" height="4" fill="#1838f0"/>
<rect x="118" y="647" width="1" height="17" fill="#58dc48"/>
<rect x="119" y="569" width="1" height="11" fill="#1850f0"/>
<rect x="119" y="580" width="1" height="4" fill="#1870f0"/>
<rect x="122" y="676" width="1" height="14" fill="url(#yo)"/>
<rect x="123" y="530" width="1" height="22" fill="#1828dc"/>
<rect x="127" y="664" width="1" height="12" fill="#c0f000"/>
<rect x="127" y="676" width="1" height="14" fill="url(#yo)"/>
<rect x="128" y="552" width="2" height="3" fill="#1838f0"/>
<rect x="128" y="580" width="2" height="4" fill="#1870f0"/>
<rect x="129" y="530" width="1" height="22" fill="#1828dc"/>
<rect x="130" y="584" width="1" height="22" fill="#1088e0"/>
<rect x="130" y="606" width="1" height="12" fill="#10a0c0"/>
<rect x="134" y="676" width="1" height="14" fill="url(#yo)"/>
<rect x="136" y="530" width="2" height="22" fill="#1828dc"/>
<rect x="136" y="552" width="2" height="3" fill="#1838f0"/>
<rect x="137" y="580" width="1" height="4" fill="#1870f0"/>
<rect x="137" y="584" width="1" height="22" fill="#1088e0"/>
<rect x="137" y="664" width="1" height="12" fill="#c0f000"/>
<rect x="139" y="569" width="1" height="11" fill="#1850f0"/>
<rect x="141" y="569" width="1" height="11" fill="#1850f0"/>
<rect x="141" y="631" width="1" height="16" fill="#20c080"/>
<rect x="141" y="647" width="1" height="17" fill="#58dc48"/>
<rect x="142" y="664" width="1" height="12" fill="#c0f000"/>
<rect x="144" y="664" width="1" height="12" fill="#c0f000"/>
<rect x="145" y="664" width="1" height="12" fill="#c0f000"/>
<rect x="142" y="676" width="4" height="14" fill="url(#yo)"/>
<rect x="145" y="534" width="1" height="18" fill="#1828dc"/>
<rect x="145" y="552" width="1" height="3" fill="#1838f0"/>
<rect x="145" y="555" width="1" height="14" fill="#1840f0"/>
<rect x="149" y="676" width="1" height="14" fill="url(#yo)"/>
<rect x="148" y="530" width="2" height="22" fill="#1828dc"/>
<rect x="150" y="555" width="1" height="14" fill="#1840f0"/>
<rect x="152" y="555" width="1" height="14" fill="#1840f0"/>
<rect x="150" y="569" width="1" height="11" fill="#1850f0"/>
<rect x="152" y="569" width="1" height="11" fill="#1850f0"/>
<rect x="153" y="580" width="1" height="4" fill="#1870f0"/>
<rect x="155" y="580" width="1" height="4" fill="#1870f0"/>
<rect x="153" y="584" width="1" height="22" fill="#1088e0"/>
<rect x="155" y="584" width="1" height="22" fill="#1088e0"/>
<rect x="153" y="676" width="5" height="14" fill="url(#yo)"/>
<rect x="155" y="552" width="1" height="3" fill="#1838f0"/>
<rect x="155" y="555" width="1" height="14" fill="#1840f0"/>
<rect x="155" y="569" width="1" height="11" fill="#1850f0"/>
<rect x="156" y="631" width="1" height="16" fill="#20c080"/>
<rect x="156" y="526" width="1" height="4" fill="#1838f0"/>
<rect x="159" y="676" width="1" height="14" fill="url(#yo)"/>
<rect x="160" y="555" width="1" height="14" fill="#1840f0"/>
<rect x="164" y="534" width="1" height="18" fill="#1828dc"/>
<rect x="164" y="552" width="1" height="3" fill="#1838f0"/>
<rect x="165" y="513" width="1" height="9" fill="#1020c8"/>
<rect x="167" y="513" width="1" height="9" fill="#1020c8"/>
<rect x="165" y="580" width="1" height="4" fill="#1870f0"/>
<rect x="167" y="580" width="1" height="4" fill="#1870f0"/>
<rect x="167" y="555" width="1" height="14" fill="#1840f0"/>
<rect x="170" y="618" width="1" height="13" fill="#10b0a0"/>
<rect x="170" y="631" width="1" height="16" fill="#20c080"/>
<rect x="170" y="676" width="1" height="14" fill="url(#yo)"/>
<rect x="171" y="618" width="2" height="13" fill="#10b0a0"/>
<rect x="172" y="552" width="2" height="3" fill="#1838f0"/>
<rect x="177" y="526" width="2" height="4" fill="#1838f0"/>
<rect x="177" y="584" width="2" height="22" fill="#1088e0"/>
<rect x="178" y="676" width="1" height="14" fill="url(#yo)"/>
<rect x="183" y="530" width="1" height="22" fill="#1828dc"/>
<rect x="185" y="530" width="1" height="22" fill="#1828dc"/>
<rect x="186" y="530" width="1" height="22" fill="#1828dc"/>
<rect x="183" y="552" width="1" height="3" fill="#1838f0"/>
<rect x="185" y="552" width="1" height="3" fill="#1838f0"/>
<rect x="186" y="552" width="1" height="3" fill="#1838f0"/>
<rect x="185" y="555" width="1" height="14" fill="#1840f0"/>
<rect x="186" y="606" width="1" height="12" fill="#10a0c0"/>
<rect x="186" y="676" width="1" height="14" fill="url(#yo)"/>
<rect x="187" y="526" width="1" height="4" fill="#1838f0"/>
<rect x="189" y="526" width="1" height="4" fill="#1838f0"/>
<rect x="187" y="530" width="1" height="22" fill="#1828dc"/>
<rect x="189" y="530" width="1" height="22" fill="#1828dc"/>
<rect x="190" y="569" width="2" height="11" fill="#1850f0"/>
<rect x="190" y="580" width="2" height="4" fill="#1870f0"/>
<rect x="190" y="618" width="2" height="13" fill="#10b0a0"/>
<rect x="190" y="631" width="2" height="16" fill="#20c080"/>
<rect x="190" y="647" width="2" height="17" fill="#58dc48"/>
<rect x="190" y="664" width="2" height="12" fill="#c0f000"/>
<rect x="190" y="676" width="2" height="14" fill="url(#yo)"/>
<rect x="190" y="676" width="7" height="14" fill="url(#yo)"/>
<rect x="193" y="569" width="2" height="11" fill="#1850f0"/>
<rect x="193" y="580" width="2" height="4" fill="#1870f0"/>
<rect x="193" y="664" width="2" height="12" fill="#c0f000"/>
<rect x="194" y="580" width="1" height="4" fill="#1870f0"/>
<rect x="196" y="580" width="1" height="4" fill="#1870f0"/>
<rect x="194" y="584" width="1" height="22" fill="#1088e0"/>
<rect x="196" y="584" width="1" height="22" fill="#1088e0"/>
<rect x="194" y="606" width="1" height="12" fill="#10a0c0"/>
<rect x="196" y="606" width="1" height="12" fill="#10a0c0"/>
<rect x="197" y="676" width="2" height="14" fill="url(#yo)"/>
<rect x="197" y="513" width="1" height="9" fill="#1020c8"/>
<rect x="199" y="513" width="1" height="9" fill="#1020c8"/>
<rect x="197" y="526" width="1" height="4" fill="#1838f0"/>
<rect x="199" y="526" width="1" height="4" fill="#1838f0"/>
<rect x="199" y="530" width="2" height="22" fill="#1828dc"/>
<rect x="199" y="631" width="2" height="16" fill="#20c080"/>
<rect x="200" y="647" width="1" height="17" fill="#58dc48"/>
<rect x="201" y="555" width="2" height="14" fill="#1840f0"/>
<rect x="202" y="664" width="1" height="12" fill="#c0f000"/>
<rect x="204" y="664" width="1" height="12" fill="#c0f000"/>
<rect x="204" y="584" width="2" height="22" fill="#1088e0"/>
<rect x="205" y="555" width="2" height="14" fill="#1840f0"/>
<rect x="207" y="606" width="2" height="12" fill="#10a0c0"/>
<rect x="207" y="647" width="2" height="17" fill="#58dc48"/>
<rect x="207" y="664" width="2" height="12" fill="#c0f000"/>
<rect x="207" y="676" width="2" height="14" fill="url(#yo)"/>
<rect x="208" y="530" width="1" height="22" fill="#1828dc"/>
<rect x="210" y="530" width="1" height="22" fill="#1828dc"/>
<rect x="212" y="530" width="1" height="22" fill="#1828dc"/>
<rect x="208" y="552" width="1" height="3" fill="#1838f0"/>
<rect x="210" y="552" width="1" height="3" fill="#1838f0"/>
<rect x="212" y="552" width="1" height="3" fill="#1838f0"/>
<rect x="209" y="513" width="1" height="9" fill="#1020c8"/>
<rect x="211" y="513" width="1" height="9" fill="#1020c8"/>
<rect x="211" y="618" width="2" height="13" fill="#10b0a0"/>
<rect x="212" y="580" width="1" height="4" fill="#1870f0"/>
<rect x="214" y="580" width="1" height="4" fill="#1870f0"/>
<rect x="215" y="580" width="1" height="4" fill="#1870f0"/>
<rect x="212" y="664" width="1" height="12" fill="#c0f000"/>
<rect x="214" y="664" width="1" height="12" fill="#c0f000"/>
<rect x="215" y="664" width="1" height="12" fill="#c0f000"/>
<rect x="212" y="676" width="4" height="14" fill="url(#yo)"/>
<rect x="210" y="530" width="2" height="22" fill="#1828dc"/>
<rect x="210" y="618" width="2" height="13" fill="#10b0a0"/>
<rect x="212" y="580" width="1" height="4" fill="#1870f0"/>
<rect x="214" y="580" width="1" height="4" fill="#1870f0"/>
<rect x="216" y="580" width="1" height="4" fill="#1870f0"/>
<rect x="216" y="530" width="1" height="22" fill="#1828dc"/>
<rect x="218" y="530" width="1" height="22" fill="#1828dc"/>
<rect x="220" y="530" width="1" height="22" fill="#1828dc"/>
<rect x="216" y="618" width="1" height="13" fill="#10b0a0"/>
<rect x="218" y="618" width="1" height="13" fill="#10b0a0"/>
<rect x="220" y="618" width="1" height="13" fill="#10b0a0"/>
<rect x="216" y="631" width="1" height="16" fill="#20c080"/>
<rect x="218" y="631" width="1" height="16" fill="#20c080"/>
<rect x="220" y="631" width="1" height="16" fill="#20c080"/>
<rect x="216" y="647" width="1" height="17" fill="#58dc48"/>
<rect x="218" y="647" width="1" height="17" fill="#58dc48"/>
<rect x="220" y="647" width="1" height="17" fill="#58dc48"/>
<rect x="216" y="664" width="1" height="12" fill="#c0f000"/>
<rect x="218" y="664" width="1" height="12" fill="#c0f000"/>
<rect x="220" y="664" width="1" height="12" fill="#c0f000"/>
<rect x="216" y="676" width="5" height="14" fill="url(#yo)"/>
<rect x="218" y="631" width="1" height="16" fill="#20c080"/>
<rect x="218" y="647" width="1" height="17" fill="#58dc48"/>
<rect x="222" y="526" width="1" height="4" fill="#1838f0"/>
<rect x="222" y="555" width="1" height="14" fill="#1840f0"/>
<rect x="222" y="569" width="1" height="11" fill="#1850f0"/>
<rect x="224" y="676" width="3" height="14" fill="url(#yo)"/>
<rect x="226" y="530" width="1" height="22" fill="#1828dc"/>
<rect x="228" y="530" width="1" height="22" fill="#1828dc"/>
<rect x="226" y="555" width="1" height="14" fill="#1840f0"/>
<rect x="228" y="555" width="1" height="14" fill="#1840f0"/>
<rect x="227" y="555" width="1" height="14" fill="#1840f0"/>
<rect x="229" y="555" width="1" height="14" fill="#1840f0"/>
<rect x="230" y="555" width="1" height="14" fill="#1840f0"/>
<rect x="227" y="569" width="1" height="11" fill="#1850f0"/>
<rect x="229" y="569" width="1" height="11" fill="#1850f0"/>
<rect x="230" y="569" width="1" height="11" fill="#1850f0"/>
<rect x="230" y="618" width="1" height="13" fill="#10b0a0"/>
<rect x="231" y="534" width="1" height="18" fill="#1828dc"/>
<rect x="231" y="513" width="1" height="9" fill="#1020c8"/>
<rect x="233" y="647" width="1" height="17" fill="#58dc48"/>
<rect x="233" y="664" width="1" height="12" fill="#c0f000"/>
<rect x="235" y="580" width="1" height="4" fill="#1870f0"/>
<rect x="237" y="580" width="1" height="4" fill="#1870f0"/>
<rect x="237" y="584" width="1" height="22" fill="#1088e0"/>
<rect x="238" y="676" width="5" height="14" fill="url(#yo)"/>
<rect x="239" y="530" width="2" height="22" fill="#1828dc"/>
<rect x="241" y="555" width="1" height="14" fill="#1840f0"/>
<rect x="241" y="569" width="1" height="11" fill="#1850f0"/>
<rect x="241" y="647" width="1" height="17" fill="#58dc48"/>
<rect x="241" y="664" width="1" height="12" fill="#c0f000"/>
<rect x="242" y="647" width="1" height="17" fill="#58dc48"/>
<rect x="242" y="664" width="1" height="12" fill="#c0f000"/>
<rect x="245" y="631" width="1" height="16" fill="#20c080"/>
<rect x="246" y="584" width="1" height="22" fill="#1088e0"/>
<rect x="248" y="584" width="1" height="22" fill="#1088e0"/>
<rect x="248" y="513" width="1" height="9" fill="#1020c8"/>
<rect x="249" y="676" width="1" height="14" fill="url(#yo)"/>
<rect x="250" y="606" width="1" height="12" fill="#10a0c0"/>
<rect x="252" y="606" width="1" height="12" fill="#10a0c0"/>
<rect x="253" y="606" width="1" height="12" fill="#10a0c0"/>
<rect x="250" y="618" width="1" height="13" fill="#10b0a0"/>
<rect x="252" y="618" width="1" height="13" fill="#10b0a0"/>
<rect x="253" y="618" width="1" height="13" fill="#10b0a0"/>
<rect x="252" y="569" width="1" height="11" fill="#1850f0"/>
<rect x="256" y="676" width="6" height="14" fill="url(#yo)"/>
<rect x="257" y="618" width="1" height="13" fill="#10b0a0"/>
<rect x="257" y="664" width="1" height="12" fill="#c0f000"/>
<rect x="258" y="530" width="1" height="22" fill="#1828dc"/>
<rect x="260" y="530" width="1" height="22" fill="#1828dc"/>
<rect x="260" y="555" width="2" height="14" fill="#1840f0"/>
<rect x="261" y="580" width="1" height="4" fill="#1870f0"/>
<rect x="263" y="580" width="1" height="4" fill="#1870f0"/>
<rect x="263" y="606" width="2" height="12" fill="#10a0c0"/>
<rect x="263" y="647" width="2" height="17" fill="#58dc48"/>
<rect x="263" y="664" width="2" height="12" fill="#c0f000"/>
<rect x="263" y="676" width="5" height="14" fill="url(#yo)"/>
<rect x="264" y="530" width="1" height="22" fill="#1828dc"/>
<rect x="266" y="530" width="1" height="22" fill="#1828dc"/>
<rect x="264" y="513" width="1" height="9" fill="#1020c8"/>
<rect x="266" y="513" width="1" height="9" fill="#1020c8"/>
<rect x="267" y="530" width="1" height="22" fill="#1828dc"/>
<rect x="269" y="530" width="1" height="22" fill="#1828dc"/>
<rect x="267" y="631" width="1" height="16" fill="#20c080"/>
<rect x="269" y="631" width="1" height="16" fill="#20c080"/>
<rect x="267" y="647" width="1" height="17" fill="#58dc48"/>
<rect x="269" y="647" width="1" height="17" fill="#58dc48"/>
<rect x="267" y="664" width="1" height="12" fill="#c0f000"/>
<rect x="269" y="664" width="1" height="12" fill="#c0f000"/>
<rect x="268" y="584" width="2" height="22" fill="#1088e0"/>
<rect x="269" y="513" width="1" height="9" fill="#1020c8"/>
<rect x="271" y="513" width="1" height="9" fill="#1020c8"/>
<rect x="269" y="526" width="1" height="4" fill="#1838f0"/>
<rect x="271" y="526" width="1" height="4" fill="#1838f0"/>
<rect x="271" y="584" width="2" height="22" fill="#1088e0"/>
<rect x="271" y="676" width="2" height="14" fill="url(#yo)"/>
<rect x="272" y="530" width="1" height="22" fill="#1828dc"/>
<rect x="274" y="530" width="1" height="22" fill="#1828dc"/>
<rect x="275" y="530" width="1" height="22" fill="#1828dc"/>
<rect x="277" y="580" width="1" height="4" fill="#1870f0"/>
<rect x="279" y="580" width="1" height="4" fill="#1870f0"/>
<rect x="277" y="584" width="1" height="22" fill="#1088e0"/>
<rect x="279" y="584" width="1" height="22" fill="#1088e0"/>
<rect x="277" y="664" width="1" height="12" fill="#c0f000"/>
<rect x="279" y="664" width="1" height="12" fill="#c0f000"/>
<rect x="277" y="676" width="3" height="14" fill="url(#yo)"/>
<rect x="279" y="664" width="1" height="12" fill="#c0f000"/>
<rect x="281" y="664" width="1" height="12" fill="#c0f000"/>
<rect x="282" y="664" width="1" height="12" fill="#c0f000"/>
<rect x="279" y="676" width="4" height="14" fill="url(#yo)"/>
<rect x="282" y="664" width="1" height="12" fill="#c0f000"/>
<rect x="284" y="664" width="1" height="12" fill="#c0f000"/>
<rect x="282" y="676" width="3" height="14" fill="url(#yo)"/>
<rect x="283" y="530" width="1" height="22" fill="#1828dc"/>
<rect x="287" y="530" width="1" height="22" fill="#1828dc"/>
<rect x="289" y="530" width="1" height="22" fill="#1828dc"/>
<rect x="287" y="676" width="6" height="14" fill="url(#yo)"/>
<rect x="289" y="580" width="1" height="4" fill="#1870f0"/>
<rect x="289" y="606" width="1" height="12" fill="#10a0c0"/>
<rect x="291" y="530" width="1" height="22" fill="#1828dc"/>
<rect x="293" y="530" width="1" height="22" fill="#1828dc"/>
<rect x="291" y="647" width="1" height="17" fill="#58dc48"/>
<rect x="293" y="647" width="1" height="17" fill="#58dc48"/>
<rect x="291" y="664" width="1" height="12" fill="#c0f000"/>
<rect x="293" y="664" width="1" height="12" fill="#c0f000"/>
<rect x="291" y="676" width="3" height="14" fill="url(#yo)"/>
<rect x="294" y="530" width="1" height="22" fill="#1828dc"/>
<rect x="296" y="530" width="1" height="22" fill="#1828dc"/>
<rect x="297" y="555" width="2" height="14" fill="#1840f0"/>
<rect x="297" y="676" width="2" height="14" fill="url(#yo)"/>
<rect x="301" y="580" width="1" height="4" fill="#1870f0"/>
<rect x="302" y="513" width="1" height="9" fill="#1020c8"/>
<rect x="304" y="513" width="1" height="9" fill="#1020c8"/>
<rect x="302" y="530" width="1" height="22" fill="#1828dc"/>
<rect x="304" y="530" width="1" height="22" fill="#1828dc"/>
<rect x="302" y="664" width="1" height="12" fill="#c0f000"/>
<rect x="304" y="664" width="1" height="12" fill="#c0f000"/>
<rect x="305" y="664" width="1" height="12" fill="#c0f000"/>
<rect x="302" y="676" width="4" height="14" fill="url(#yo)"/>
<rect x="304" y="555" width="2" height="14" fill="#1840f0"/>
<rect x="304" y="569" width="2" height="11" fill="#1850f0"/>
<rect x="304" y="580" width="2" height="4" fill="#1870f0"/>
<rect x="304" y="584" width="2" height="22" fill="#1088e0"/>
<rect x="308" y="526" width="1" height="4" fill="#1838f0"/>
<rect x="308" y="631" width="1" height="16" fill="#20c080"/>
<rect x="310" y="584" width="1" height="22" fill="#1088e0"/>
<rect x="312" y="584" width="1" height="22" fill="#1088e0"/>
<rect x="313" y="584" width="1" height="22" fill="#1088e0"/>
<rect x="310" y="676" width="4" height="14" fill="url(#yo)"/>
<rect x="312" y="555" width="2" height="14" fill="#1840f0"/>
<rect x="312" y="569" width="2" height="11" fill="#1850f0"/>
<rect x="312" y="530" width="1" height="22" fill="#1828dc"/>
<rect x="314" y="530" width="1" height="22" fill="#1828dc"/>
<rect x="312" y="664" width="1" height="12" fill="#c0f000"/>
<rect x="314" y="664" width="1" height="12" fill="#c0f000"/>
<rect x="312" y="676" width="3" height="14" fill="url(#yo)"/>
<rect x="315" y="584" width="1" height="22" fill="#1088e0"/>
<rect x="317" y="584" width="1" height="22" fill="#1088e0"/>
<rect x="315" y="606" width="1" height="12" fill="#10a0c0"/>
<rect x="317" y="606" width="1" height="12" fill="#10a0c0"/>
<rect x="315" y="618" width="1" height="13" fill="#10b0a0"/>
<rect x="317" y="618" width="1" height="13" fill="#10b0a0"/>
<rect x="315" y="631" width="1" height="16" fill="#20c080"/>
<rect x="317" y="631" width="1" height="16" fill="#20c080"/>
<rect x="315" y="664" width="1" height="12" fill="#c0f000"/>
<rect x="317" y="664" width="1" height="12" fill="#c0f000"/>
<rect x="315" y="676" width="3" height="14" fill="url(#yo)"/>
<rect x="317" y="580" width="1" height="4" fill="#1870f0"/>
<rect x="319" y="580" width="1" height="4" fill="#1870f0"/>
<rect x="317" y="618" width="1" height="13" fill="#10b0a0"/>
<rect x="319" y="618" width="1" height="13" fill="#10b0a0"/>
<rect x="317" y="631" width="1" height="16" fill="#20c080"/>
<rect x="319" y="631" width="1" height="16" fill="#20c080"/>
<rect x="317" y="647" width="1" height="17" fill="#58dc48"/>
<rect x="319" y="647" width="1" height="17" fill="#58dc48"/>
<rect x="319" y="526" width="2" height="4" fill="#1838f0"/>
<rect x="321" y="530" width="2" height="22" fill="#1828dc"/>
<rect x="322" y="618" width="2" height="13" fill="#10b0a0"/>
<rect x="322" y="631" width="2" height="16" fill="#20c080"/>
<rect x="322" y="647" width="2" height="17" fill="#58dc48"/>
<rect x="323" y="530" width="1" height="22" fill="#1828dc"/>
<rect x="325" y="530" width="1" height="22" fill="#1828dc"/>
<rect x="323" y="580" width="1" height="4" fill="#1870f0"/>
<rect x="325" y="580" width="1" height="4" fill="#1870f0"/>
<rect x="323" y="584" width="1" height="22" fill="#1088e0"/>
<rect x="325" y="584" width="1" height="22" fill="#1088e0"/>
<rect x="323" y="606" width="1" height="12" fill="#10a0c0"/>
<rect x="325" y="606" width="1" height="12" fill="#10a0c0"/>
<rect x="324" y="664" width="1" height="12" fill="#c0f000"/>
<rect x="326" y="664" width="1" height="12" fill="#c0f000"/>
<rect x="327" y="664" width="1" height="12" fill="#c0f000"/>
<rect x="324" y="676" width="4" height="14" fill="url(#yo)"/>
<rect x="326" y="647" width="1" height="17" fill="#58dc48"/>
<rect x="326" y="664" width="1" height="12" fill="#c0f000"/>
<rect x="328" y="555" width="1" height="14" fill="#1840f0"/>
<rect x="330" y="555" width="1" height="14" fill="#1840f0"/>
<rect x="328" y="569" width="1" height="11" fill="#1850f0"/>
<rect x="330" y="569" width="1" height="11" fill="#1850f0"/>
<rect x="325" y="530" width="1" height="22" fill="#1828dc"/>
<rect x="327" y="530" width="1" height="22" fill="#1828dc"/>
<rect x="325" y="584" width="1" height="22" fill="#1088e0"/>
<rect x="327" y="584" width="1" height="22" fill="#1088e0"/>
<rect x="325" y="606" width="1" height="12" fill="#10a0c0"/>
<rect x="327" y="606" width="1" height="12" fill="#10a0c0"/>
<rect x="325" y="664" width="1" height="12" fill="#c0f000"/>
<rect x="327" y="664" width="1" height="12" fill="#c0f000"/>
<rect x="325" y="676" width="3" height="14" fill="url(#yo)"/>
<rect x="328" y="555" width="2" height="14" fill="#1840f0"/>
<rect x="328" y="569" width="2" height="11" fill="#1850f0"/>
<rect x="330" y="676" width="5" height="14" fill="url(#yo)"/>
<rect x="331" y="618" width="1" height="13" fill="#10b0a0"/>
<rect x="332" y="555" width="1" height="14" fill="#1840f0"/>
<rect x="334" y="555" width="1" height="14" fill="#1840f0"/>
<rect x="335" y="530" width="1" height="22" fill="#1828dc"/>
<rect x="335" y="580" width="1" height="4" fill="#1870f0"/>
<rect x="335" y="647" width="1" height="17" fill="#58dc48"/>
<rect x="335" y="664" width="1" height="12" fill="#c0f000"/>
<rect x="335" y="676" width="1" height="14" fill="url(#yo)"/>
<rect x="337" y="647" width="2" height="17" fill="#58dc48"/>
<rect x="337" y="664" width="2" height="12" fill="#c0f000"/>
<rect x="337" y="676" width="2" height="14" fill="url(#yo)"/>
<rect x="342" y="647" width="1" height="17" fill="#58dc48"/>
<rect x="343" y="580" width="1" height="4" fill="#1870f0"/>
<rect x="345" y="580" width="1" height="4" fill="#1870f0"/>
<rect x="346" y="552" width="1" height="3" fill="#1838f0"/>
<rect x="347" y="676" width="7" height="14" fill="url(#yo)"/>
<rect x="349" y="513" width="1" height="9" fill="#1020c8"/>
<rect x="349" y="647" width="1" height="17" fill="#58dc48"/>
<rect x="349" y="664" width="1" height="12" fill="#c0f000"/>
<rect x="351" y="530" width="1" height="22" fill="#1828dc"/>
<rect x="353" y="530" width="1" height="22" fill="#1828dc"/>
<rect x="351" y="555" width="1" height="14" fill="#1840f0"/>
<rect x="353" y="555" width="1" height="14" fill="#1840f0"/>
<rect x="351" y="584" width="1" height="22" fill="#1088e0"/>
<rect x="353" y="584" width="1" height="22" fill="#1088e0"/>
<rect x="354" y="664" width="1" height="12" fill="#c0f000"/>
<rect x="356" y="664" width="1" height="12" fill="#c0f000"/>
<rect x="358" y="664" width="1" height="12" fill="#c0f000"/>
<rect x="354" y="676" width="5" height="14" fill="url(#yo)"/>
<rect x="358" y="569" width="1" height="11" fill="#1850f0"/>
<rect x="360" y="569" width="1" height="11" fill="#1850f0"/>
<rect x="361" y="530" width="1" height="22" fill="#1828dc"/>
<rect x="363" y="530" width="1" height="22" fill="#1828dc"/>
<rect x="364" y="530" width="1" height="22" fill="#1828dc"/>
<rect x="361" y="555" width="1" height="14" fill="#1840f0"/>
<rect x="363" y="555" width="1" height="14" fill="#1840f0"/>
<rect x="364" y="555" width="1" height="14" fill="#1840f0"/>
<rect x="361" y="569" width="1" height="11" fill="#1850f0"/>
<rect x="363" y="569" width="1" height="11" fill="#1850f0"/>
<rect x="364" y="569" width="1" height="11" fill="#1850f0"/>
<rect x="361" y="580" width="1" height="4" fill="#1870f0"/>
<rect x="363" y="580" width="1" height="4" fill="#1870f0"/>
<rect x="364" y="580" width="1" height="4" fill="#1870f0"/>
<rect x="364" y="618" width="2" height="13" fill="#10b0a0"/>
<rect x="365" y="552" width="1" height="3" fill="#1838f0"/>
<rect x="367" y="552" width="1" height="3" fill="#1838f0"/>
<rect x="365" y="580" width="1" height="4" fill="#1870f0"/>
<rect x="367" y="580" width="1" height="4" fill="#1870f0"/>
<rect x="365" y="584" width="1" height="22" fill="#1088e0"/>
<rect x="367" y="584" width="1" height="22" fill="#1088e0"/>
<rect x="367" y="526" width="1" height="4" fill="#1838f0"/>
<rect x="368" y="530" width="1" height="22" fill="#1828dc"/>
<rect x="370" y="530" width="1" height="22" fill="#1828dc"/>
<rect x="371" y="530" width="1" height="22" fill="#1828dc"/>
<rect x="368" y="580" width="1" height="4" fill="#1870f0"/>
<rect x="370" y="580" width="1" height="4" fill="#1870f0"/>
<rect x="371" y="580" width="1" height="4" fill="#1870f0"/>
<rect x="372" y="606" width="2" height="12" fill="#10a0c0"/>
<rect x="372" y="664" width="2" height="12" fill="#c0f000"/>
<rect x="372" y="676" width="2" height="14" fill="url(#yo)"/>
<rect x="373" y="676" width="4" height="14" fill="url(#yo)"/>
<rect x="374" y="530" width="1" height="22" fill="#1828dc"/>
<rect x="376" y="530" width="1" height="22" fill="#1828dc"/>
<rect x="377" y="580" width="1" height="4" fill="#1870f0"/>
<rect x="379" y="580" width="1" height="4" fill="#1870f0"/>
<rect x="377" y="552" width="1" height="3" fill="#1838f0"/>
<rect x="379" y="552" width="1" height="3" fill="#1838f0"/>
<rect x="377" y="555" width="1" height="14" fill="#1840f0"/>
<rect x="379" y="555" width="1" height="14" fill="#1840f0"/>
<rect x="379" y="555" width="1" height="14" fill="#1840f0"/>
<rect x="381" y="555" width="1" height="14" fill="#1840f0"/>
<rect x="383" y="555" width="1" height="14" fill="#1840f0"/>
<rect x="385" y="555" width="1" height="14" fill="#1840f0"/>
<rect x="387" y="555" width="1" height="14" fill="#1840f0"/>
<rect x="379" y="569" width="1" height="11" fill="#1850f0"/>
<rect x="381" y="569" width="1" height="11" fill="#1850f0"/>
<rect x="383" y="569" width="1" height="11" fill="#1850f0"/>
<rect x="385" y="569" width="1" height="11" fill="#1850f0"/>
<rect x="387" y="569" width="1" height="11" fill="#1850f0"/>
<rect x="380" y="618" width="1" height="13" fill="#10b0a0"/>
<rect x="382" y="618" width="1" height="13" fill="#10b0a0"/>
<rect x="380" y="664" width="1" height="12" fill="#c0f000"/>
<rect x="382" y="664" width="1" height="12" fill="#c0f000"/>
<rect x="380" y="676" width="3" height="14" fill="url(#yo)"/>
<rect x="383" y="530" width="1" height="22" fill="#1828dc"/>
<rect x="384" y="664" width="1" height="12" fill="#c0f000"/>
<rect x="386" y="664" width="1" height="12" fill="#c0f000"/>
<rect x="384" y="676" width="3" height="14" fill="url(#yo)"/>
<rect x="392" y="580" width="1" height="4" fill="#1870f0"/>
<rect x="393" y="530" width="1" height="22" fill="#1828dc"/>
<rect x="395" y="530" width="1" height="22" fill="#1828dc"/>
<rect x="393" y="676" width="3" height="14" fill="url(#yo)"/>
<rect x="396" y="530" width="1" height="22" fill="#1828dc"/>
<rect x="398" y="530" width="1" height="22" fill="#1828dc"/>
<rect x="400" y="530" width="1" height="22" fill="#1828dc"/>
<rect x="402" y="530" width="1" height="22" fill="#1828dc"/>
<rect x="396" y="555" width="1" height="14" fill="#1840f0"/>
<rect x="398" y="555" width="1" height="14" fill="#1840f0"/>
<rect x="400" y="555" width="1" height="14" fill="#1840f0"/>
<rect x="402" y="555" width="1" height="14" fill="#1840f0"/>
<rect x="396" y="569" width="1" height="11" fill="#1850f0"/>
<rect x="398" y="569" width="1" height="11" fill="#1850f0"/>
<rect x="400" y="569" width="1" height="11" fill="#1850f0"/>
<rect x="402" y="569" width="1" height="11" fill="#1850f0"/>
<rect x="398" y="580" width="1" height="4" fill="#1870f0"/>
<rect x="400" y="580" width="1" height="4" fill="#1870f0"/>
<rect x="400" y="584" width="1" height="22" fill="#1088e0"/>
<rect x="400" y="631" width="1" height="16" fill="#20c080"/>
<rect x="400" y="647" width="1" height="17" fill="#58dc48"/>
<rect x="404" y="606" width="1" height="12" fill="#10a0c0"/>
<rect x="406" y="606" width="1" height="12" fill="#10a0c0"/>
<rect x="404" y="618" width="1" height="13" fill="#10b0a0"/>
<rect x="406" y="618" width="1" height="13" fill="#10b0a0"/>
<rect x="407" y="647" width="1" height="17" fill="#58dc48"/>
<rect x="408" y="513" width="1" height="9" fill="#1020c8"/>
<rect x="410" y="513" width="1" height="9" fill="#1020c8"/>
<rect x="408" y="526" width="1" height="4" fill="#1838f0"/>
<rect x="410" y="526" width="1" height="4" fill="#1838f0"/>
<rect x="408" y="530" width="1" height="22" fill="#1828dc"/>
<rect x="410" y="530" width="1" height="22" fill="#1828dc"/>
<rect x="409" y="555" width="1" height="14" fill="#1840f0"/>
<rect x="411" y="555" width="1" height="14" fill="#1840f0"/>
<rect x="413" y="555" width="1" height="14" fill="#1840f0"/>
<rect x="415" y="555" width="1" height="14" fill="#1840f0"/>
<rect x="411" y="584" width="2" height="22" fill="#1088e0"/>
<rect x="412" y="618" width="1" height="13" fill="#10b0a0"/>
<rect x="417" y="530" width="2" height="22" fill="#1828dc"/>
<rect x="419" y="584" width="2" height="22" fill="#1088e0"/>
<rect x="419" y="513" width="2" height="9" fill="#1020c8"/>
<rect x="420" y="647" width="1" height="17" fill="#58dc48"/>
<rect x="422" y="647" width="1" height="17" fill="#58dc48"/>
<rect x="423" y="647" width="1" height="17" fill="#58dc48"/>
<rect x="425" y="618" width="1" height="13" fill="#10b0a0"/>
<rect x="427" y="618" width="1" height="13" fill="#10b0a0"/>
<rect x="428" y="618" width="1" height="13" fill="#10b0a0"/>
<rect x="425" y="631" width="1" height="16" fill="#20c080"/>
<rect x="427" y="631" width="1" height="16" fill="#20c080"/>
<rect x="428" y="631" width="1" height="16" fill="#20c080"/>
<rect x="425" y="555" width="1" height="14" fill="#1840f0"/>
<rect x="427" y="555" width="1" height="14" fill="#1840f0"/>
<rect x="428" y="555" width="1" height="14" fill="#1840f0"/>
<rect x="425" y="569" width="1" height="11" fill="#1850f0"/>
<rect x="427" y="569" width="1" height="11" fill="#1850f0"/>
<rect x="428" y="569" width="1" height="11" fill="#1850f0"/>
<rect x="426" y="647" width="2" height="17" fill="#58dc48"/>
<rect x="426" y="664" width="2" height="12" fill="#c0f000"/>
<rect x="428" y="530" width="1" height="22" fill="#1828dc"/>
<rect x="430" y="530" width="1" height="22" fill="#1828dc"/>
<rect x="431" y="580" width="1" height="4" fill="#1870f0"/>
<rect x="431" y="584" width="1" height="22" fill="#1088e0"/>
<rect x="431" y="631" width="1" height="16" fill="#20c080"/>
<rect x="431" y="647" width="1" height="17" fill="#58dc48"/>
<rect x="431" y="664" width="1" height="12" fill="#c0f000"/>
<rect x="432" y="530" width="1" height="22" fill="#1828dc"/>
<rect x="434" y="530" width="1" height="22" fill="#1828dc"/>
<rect x="432" y="555" width="1" height="14" fill="#1840f0"/>
<rect x="434" y="555" width="1" height="14" fill="#1840f0"/>
<rect x="432" y="569" width="1" height="11" fill="#1850f0"/>
<rect x="434" y="569" width="1" height="11" fill="#1850f0"/>
<rect x="437" y="584" width="2" height="22" fill="#1088e0"/>
<rect x="438" y="647" width="2" height="17" fill="#58dc48"/>
<rect x="439" y="530" width="1" height="22" fill="#1828dc"/>
<rect x="441" y="530" width="1" height="22" fill="#1828dc"/>
<rect x="440" y="569" width="1" height="11" fill="#1850f0"/>
<rect x="442" y="569" width="1" height="11" fill="#1850f0"/>
<rect x="442" y="664" width="1" height="12" fill="#c0f000"/>
<rect x="444" y="664" width="1" height="12" fill="#c0f000"/>
<rect x="442" y="676" width="3" height="14" fill="url(#yo)"/>
<rect x="443" y="555" width="1" height="14" fill="#1840f0"/>
<rect x="445" y="555" width="1" height="14" fill="#1840f0"/>
<rect x="399" y="631" width="2" height="16" fill="#20c080"/>
<rect x="399" y="647" width="2" height="17" fill="#58dc48"/>
<rect x="406" y="647" width="2" height="17" fill="#58dc48"/>
<rect x="440" y="530" width="1" height="22" fill="#1828dc"/>
<rect x="442" y="530" width="1" height="22" fill="#1828dc"/>
<rect x="440" y="555" width="1" height="14" fill="#1840f0"/>
<rect x="442" y="555" width="1" height="14" fill="#1840f0"/>
<rect x="440" y="569" width="1" height="11" fill="#1850f0"/>
<rect x="442" y="569" width="1" height="11" fill="#1850f0"/>
<rect x="442" y="664" width="2" height="12" fill="#c0f000"/>
<rect x="442" y="676" width="2" height="14" fill="url(#yo)"/>
<rect x="443" y="555" width="1" height="14" fill="#1840f0"/>
<rect x="445" y="555" width="1" height="14" fill="#1840f0"/>
<rect x="444" y="647" width="2" height="17" fill="#58dc48"/>
<rect x="444" y="664" width="2" height="12" fill="#c0f000"/>
<rect x="444" y="676" width="2" height="14" fill="url(#yo)"/>
<rect x="446" y="580" width="1" height="4" fill="#1870f0"/>
<rect x="446" y="584" width="1" height="22" fill="#1088e0"/>
<rect x="448" y="530" width="1" height="22" fill="#1828dc"/>
<rect x="450" y="530" width="1" height="22" fill="#1828dc"/>
<rect x="448" y="555" width="1" height="14" fill="#1840f0"/>
<rect x="450" y="555" width="1" height="14" fill="#1840f0"/>
<rect x="448" y="569" width="1" height="11" fill="#1850f0"/>
<rect x="450" y="569" width="1" height="11" fill="#1850f0"/>
<rect x="450" y="631" width="1" height="16" fill="#20c080"/>
<rect x="450" y="647" width="1" height="17" fill="#58dc48"/>
<rect x="453" y="526" width="2" height="4" fill="#1838f0"/>
<rect x="453" y="530" width="2" height="22" fill="#1828dc"/>
<rect x="455" y="580" width="1" height="4" fill="#1870f0"/>
<rect x="457" y="580" width="1" height="4" fill="#1870f0"/>
<rect x="457" y="552" width="1" height="3" fill="#1838f0"/>
<rect x="459" y="552" width="1" height="3" fill="#1838f0"/>
<rect x="460" y="552" width="1" height="3" fill="#1838f0"/>
<rect x="457" y="555" width="1" height="14" fill="#1840f0"/>
<rect x="459" y="555" width="1" height="14" fill="#1840f0"/>
<rect x="460" y="555" width="1" height="14" fill="#1840f0"/>
<rect x="457" y="569" width="1" height="11" fill="#1850f0"/>
<rect x="459" y="569" width="1" height="11" fill="#1850f0"/>
<rect x="460" y="569" width="1" height="11" fill="#1850f0"/>
<rect x="457" y="580" width="1" height="4" fill="#1870f0"/>
<rect x="459" y="580" width="1" height="4" fill="#1870f0"/>
<rect x="460" y="580" width="1" height="4" fill="#1870f0"/>
<rect x="457" y="584" width="1" height="22" fill="#1088e0"/>
<rect x="459" y="584" width="1" height="22" fill="#1088e0"/>
<rect x="460" y="584" width="1" height="22" fill="#1088e0"/>
<rect x="458" y="647" width="1" height="17" fill="#58dc48"/>
<rect x="460" y="647" width="1" height="17" fill="#58dc48"/>
<rect x="458" y="664" width="1" height="12" fill="#c0f000"/>
<rect x="460" y="664" width="1" height="12" fill="#c0f000"/>
<rect x="461" y="676" width="2" height="14" fill="url(#yo)"/>
<rect x="462" y="569" width="1" height="11" fill="#1850f0"/>
<rect x="464" y="569" width="1" height="11" fill="#1850f0"/>
<rect x="462" y="580" width="1" height="4" fill="#1870f0"/>
<rect x="464" y="580" width="1" height="4" fill="#1870f0"/>
<rect x="462" y="584" width="1" height="22" fill="#1088e0"/>
<rect x="464" y="584" width="1" height="22" fill="#1088e0"/>
<rect x="462" y="606" width="1" height="12" fill="#10a0c0"/>
<rect x="464" y="606" width="1" height="12" fill="#10a0c0"/>
<rect x="463" y="664" width="2" height="12" fill="#c0f000"/>
<rect x="463" y="513" width="2" height="9" fill="#1020c8"/>
<rect x="466" y="580" width="1" height="4" fill="#1870f0"/>
<rect x="468" y="580" width="1" height="4" fill="#1870f0"/>
<rect x="469" y="580" width="1" height="4" fill="#1870f0"/>
<rect x="468" y="647" width="1" height="17" fill="#58dc48"/>
<rect x="470" y="647" width="1" height="17" fill="#58dc48"/>
<rect x="468" y="664" width="1" height="12" fill="#c0f000"/>
<rect x="470" y="664" width="1" height="12" fill="#c0f000"/>
<rect x="468" y="676" width="3" height="14" fill="url(#yo)"/>
<rect x="470" y="580" width="1" height="4" fill="#1870f0"/>
<rect x="472" y="580" width="1" height="4" fill="#1870f0"/>
<rect x="470" y="584" width="1" height="22" fill="#1088e0"/>
<rect x="472" y="584" width="1" height="22" fill="#1088e0"/>
<rect x="470" y="606" width="1" height="12" fill="#10a0c0"/>
<rect x="472" y="606" width="1" height="12" fill="#10a0c0"/>
<rect x="472" y="530" width="1" height="22" fill="#1828dc"/>
<rect x="474" y="530" width="1" height="22" fill="#1828dc"/>
<rect x="476" y="530" width="1" height="22" fill="#1828dc"/>
<rect x="478" y="530" width="1" height="22" fill="#1828dc"/>
<rect x="476" y="676" width="3" height="14" fill="url(#yo)"/>
<rect x="476" y="584" width="1" height="22" fill="#1088e0"/>
<rect x="476" y="606" width="1" height="12" fill="#10a0c0"/>
<rect x="477" y="647" width="1" height="17" fill="#58dc48"/>
<rect x="479" y="647" width="1" height="17" fill="#58dc48"/>
<rect x="481" y="647" width="1" height="17" fill="#58dc48"/>
<rect x="483" y="647" width="1" height="17" fill="#58dc48"/>
<rect x="484" y="647" width="1" height="17" fill="#58dc48"/>
<rect x="486" y="647" width="1" height="17" fill="#58dc48"/>
<rect x="478" y="618" width="1" height="13" fill="#10b0a0"/>
<rect x="480" y="618" width="1" height="13" fill="#10b0a0"/>
<rect x="480" y="530" width="2" height="22" fill="#1828dc"/>
<rect x="480" y="606" width="2" height="12" fill="#10a0c0"/>
<rect x="481" y="664" width="1" height="12" fill="#c0f000"/>
<rect x="483" y="664" width="1" height="12" fill="#c0f000"/>
<rect x="481" y="676" width="3" height="14" fill="url(#yo)"/>
<rect x="483" y="530" width="1" height="22" fill="#1828dc"/>
<rect x="485" y="530" width="1" height="22" fill="#1828dc"/>
<rect x="486" y="530" width="2" height="22" fill="#1828dc"/>
<rect x="486" y="676" width="2" height="14" fill="url(#yo)"/>
<rect x="488" y="606" width="2" height="12" fill="#10a0c0"/>
<rect x="488" y="618" width="2" height="13" fill="#10b0a0"/>
<rect x="491" y="676" width="6" height="14" fill="url(#yo)"/>
<rect x="493" y="530" width="1" height="22" fill="#1828dc"/>
<rect x="495" y="530" width="1" height="22" fill="#1828dc"/>
<rect x="496" y="618" width="1" height="13" fill="#10b0a0"/>
<rect x="498" y="618" width="1" height="13" fill="#10b0a0"/>
<rect x="496" y="631" width="1" height="16" fill="#20c080"/>
<rect x="498" y="631" width="1" height="16" fill="#20c080"/>
<rect x="498" y="569" width="1" height="11" fill="#1850f0"/>
<rect x="500" y="569" width="1" height="11" fill="#1850f0"/>
<rect x="498" y="580" width="1" height="4" fill="#1870f0"/>
<rect x="500" y="580" width="1" height="4" fill="#1870f0"/>
<rect x="498" y="584" width="1" height="22" fill="#1088e0"/>
<rect x="500" y="584" width="1" height="22" fill="#1088e0"/>
<rect x="501" y="676" width="1" height="14" fill="url(#yo)"/>
<rect x="503" y="513" width="1" height="9" fill="#1020c8"/>
<rect x="505" y="513" width="1" height="9" fill="#1020c8"/>
<rect x="503" y="530" width="1" height="22" fill="#1828dc"/>
<rect x="505" y="530" width="1" height="22" fill="#1828dc"/>
<rect x="505" y="664" width="2" height="12" fill="#c0f000"/>
<rect x="505" y="676" width="2" height="14" fill="url(#yo)"/>
<rect x="508" y="580" width="2" height="4" fill="#1870f0"/>
<rect x="508" y="530" width="2" height="22" fill="#1828dc"/>
<rect x="511" y="606" width="1" height="12" fill="#10a0c0"/>
<rect x="513" y="606" width="1" height="12" fill="#10a0c0"/>
<rect x="509" y="676" width="3" height="14" fill="url(#yo)"/>
<rect x="514" y="530" width="2" height="22" fill="#1828dc"/>
<rect x="514" y="664" width="2" height="12" fill="#c0f000"/>
<rect x="514" y="676" width="2" height="14" fill="url(#yo)"/>
<rect x="517" y="530" width="1" height="22" fill="#1828dc"/>
<rect x="519" y="530" width="1" height="22" fill="#1828dc"/>
<rect x="520" y="530" width="1" height="22" fill="#1828dc"/>
<rect x="517" y="580" width="1" height="4" fill="#1870f0"/>
<rect x="519" y="580" width="1" height="4" fill="#1870f0"/>
<rect x="520" y="580" width="1" height="4" fill="#1870f0"/>
<rect x="517" y="676" width="4" height="14" fill="url(#yo)"/>
<rect x="522" y="530" width="1" height="22" fill="#1828dc"/>
<rect x="524" y="530" width="1" height="22" fill="#1828dc"/>
<rect x="522" y="580" width="1" height="4" fill="#1870f0"/>
<rect x="524" y="580" width="1" height="4" fill="#1870f0"/>
<rect x="521" y="647" width="2" height="17" fill="#58dc48"/>
<rect x="521" y="664" width="2" height="12" fill="#c0f000"/>
<rect x="521" y="676" width="2" height="14" fill="url(#yo)"/>
<rect x="525" y="664" width="1" height="12" fill="#c0f000"/>
<rect x="527" y="664" width="1" height="12" fill="#c0f000"/>
<rect x="529" y="664" width="1" height="12" fill="#c0f000"/>
<rect x="531" y="664" width="1" height="12" fill="#c0f000"/>
<rect x="525" y="676" width="7" height="14" fill="url(#yo)"/>
<rect x="526" y="530" width="1" height="22" fill="#1828dc"/>
<rect x="528" y="530" width="1" height="22" fill="#1828dc"/>
<rect x="532" y="584" width="2" height="22" fill="#1088e0"/>
<rect x="532" y="606" width="2" height="12" fill="#10a0c0"/>
<rect x="532" y="513" width="2" height="9" fill="#1020c8"/>
<rect x="532" y="526" width="2" height="4" fill="#1838f0"/>
<rect x="532" y="664" width="1" height="12" fill="#c0f000"/>
<rect x="534" y="664" width="1" height="12" fill="#c0f000"/>
<rect x="532" y="676" width="3" height="14" fill="url(#yo)"/>
<rect x="535" y="664" width="1" height="12" fill="#c0f000"/>
<rect x="537" y="664" width="1" height="12" fill="#c0f000"/>
<rect x="539" y="664" width="1" height="12" fill="#c0f000"/>
<rect x="541" y="664" width="1" height="12" fill="#c0f000"/>
<rect x="535" y="676" width="7" height="14" fill="url(#yo)"/>
<rect x="537" y="631" width="1" height="16" fill="#20c080"/>
<rect x="539" y="631" width="1" height="16" fill="#20c080"/>
<rect x="540" y="631" width="1" height="16" fill="#20c080"/>
<rect x="537" y="647" width="1" height="17" fill="#58dc48"/>
<rect x="539" y="647" width="1" height="17" fill="#58dc48"/>
<rect x="540" y="647" width="1" height="17" fill="#58dc48"/>
<rect x="537" y="664" width="1" height="12" fill="#c0f000"/>
<rect x="539" y="664" width="1" height="12" fill="#c0f000"/>
<rect x="540" y="664" width="1" height="12" fill="#c0f000"/>
<rect x="539" y="631" width="1" height="16" fill="#20c080"/>
<rect x="539" y="647" width="1" height="17" fill="#58dc48"/>
<rect x="540" y="526" width="2" height="4" fill="#1838f0"/>
<rect x="543" y="676" width="6" height="14" fill="url(#yo)"/>
<rect x="543" y="664" width="2" height="12" fill="#c0f000"/>
<rect x="544" y="530" width="1" height="22" fill="#1828dc"/>
<rect x="546" y="530" width="1" height="22" fill="#1828dc"/>
<rect x="548" y="530" width="1" height="22" fill="#1828dc"/>
<rect x="550" y="530" width="1" height="22" fill="#1828dc"/>
<rect x="551" y="530" width="1" height="22" fill="#1828dc"/>
<rect x="553" y="530" width="1" height="22" fill="#1828dc"/>
<rect x="551" y="555" width="1" height="14" fill="#1840f0"/>
<rect x="553" y="555" width="1" height="14" fill="#1840f0"/>
<rect x="551" y="569" width="1" height="11" fill="#1850f0"/>
<rect x="553" y="569" width="1" height="11" fill="#1850f0"/>
<rect x="551" y="676" width="3" height="14" fill="url(#yo)"/>
<rect x="553" y="647" width="1" height="17" fill="#58dc48"/>
<rect x="555" y="647" width="1" height="17" fill="#58dc48"/>
<rect x="553" y="569" width="1" height="11" fill="#1850f0"/>
<rect x="555" y="569" width="1" height="11" fill="#1850f0"/>
<rect x="555" y="530" width="1" height="22" fill="#1828dc"/>
<rect x="557" y="530" width="1" height="22" fill="#1828dc"/>
<rect x="558" y="530" width="1" height="22" fill="#1828dc"/>
<rect x="560" y="530" width="1" height="22" fill="#1828dc"/>
<rect x="558" y="676" width="3" height="14" fill="url(#yo)"/>
<rect x="559" y="552" width="1" height="3" fill="#1838f0"/>
<rect x="561" y="552" width="1" height="3" fill="#1838f0"/>
<rect x="562" y="552" width="1" height="3" fill="#1838f0"/>
<rect x="562" y="584" width="2" height="22" fill="#1088e0"/>
<rect x="562" y="606" width="2" height="12" fill="#10a0c0"/>
<rect x="562" y="618" width="2" height="13" fill="#10b0a0"/>
<rect x="563" y="631" width="1" height="16" fill="#20c080"/>
<rect x="565" y="631" width="1" height="16" fill="#20c080"/>
<rect x="563" y="676" width="3" height="14" fill="url(#yo)"/>
<rect x="739" y="526" width="1" height="4" fill="#1838f0"/>
<rect x="739" y="530" width="1" height="22" fill="#1828dc"/>
<rect x="739" y="606" width="1" height="12" fill="#10a0c0"/>
<rect x="739" y="618" width="1" height="13" fill="#10b0a0"/>
<rect x="739" y="631" width="1" height="16" fill="#20c080"/>
<rect x="739" y="647" width="1" height="17" fill="#58dc48"/>
<rect x="740" y="631" width="1" height="16" fill="#20c080"/>
<rect x="742" y="534" width="1" height="18" fill="#1828dc"/>
<rect x="745" y="580" width="1" height="4" fill="#1870f0"/>
<rect x="747" y="580" width="1" height="4" fill="#1870f0"/>
<rect x="745" y="584" width="1" height="22" fill="#1088e0"/>
<rect x="747" y="584" width="1" height="22" fill="#1088e0"/>
<rect x="747" y="530" width="1" height="22" fill="#1828dc"/>
<rect x="749" y="530" width="1" height="22" fill="#1828dc"/>
<rect x="750" y="530" width="1" height="22" fill="#1828dc"/>
<rect x="750" y="569" width="1" height="11" fill="#1850f0"/>
<rect x="750" y="647" width="1" height="17" fill="#58dc48"/>
<rect x="751" y="530" width="2" height="22" fill="#1828dc"/>
<rect x="752" y="580" width="1" height="4" fill="#1870f0"/>
<rect x="754" y="580" width="1" height="4" fill="#1870f0"/>
<rect x="755" y="580" width="1" height="4" fill="#1870f0"/>
<rect x="752" y="584" width="1" height="22" fill="#1088e0"/>
<rect x="754" y="584" width="1" height="22" fill="#1088e0"/>
<rect x="755" y="584" width="1" height="22" fill="#1088e0"/>
<rect x="752" y="606" width="1" height="12" fill="#10a0c0"/>
<rect x="754" y="606" width="1" height="12" fill="#10a0c0"/>
<rect x="755" y="606" width="1" height="12" fill="#10a0c0"/>
<rect x="752" y="664" width="1" height="12" fill="#c0f000"/>
<rect x="754" y="664" width="1" height="12" fill="#c0f000"/>
<rect x="755" y="664" width="1" height="12" fill="#c0f000"/>
<rect x="752" y="676" width="4" height="14" fill="url(#yo)"/>
<rect x="755" y="552" width="1" height="3" fill="#1838f0"/>
<rect x="755" y="555" width="1" height="14" fill="#1840f0"/>
<rect x="755" y="569" width="1" height="11" fill="#1850f0"/>
<rect x="755" y="676" width="1" height="14" fill="url(#yo)"/>
<rect x="756" y="647" width="1" height="17" fill="#58dc48"/>
<rect x="758" y="647" width="1" height="17" fill="#58dc48"/>
<rect x="758" y="580" width="2" height="4" fill="#1870f0"/>
<rect x="758" y="584" width="2" height="22" fill="#1088e0"/>
<rect x="758" y="631" width="2" height="16" fill="#20c080"/>
<rect x="758" y="676" width="2" height="14" fill="url(#yo)"/>
<rect x="760" y="513" width="2" height="9" fill="#1020c8"/>
<rect x="762" y="555" width="2" height="14" fill="#1840f0"/>
<rect x="762" y="569" width="2" height="11" fill="#1850f0"/>
<rect x="766" y="569" width="1" height="11" fill="#1850f0"/>
<rect x="771" y="584" width="1" height="22" fill="#1088e0"/>
<rect x="773" y="584" width="1" height="22" fill="#1088e0"/>
<rect x="771" y="676" width="3" height="14" fill="url(#yo)"/>
<rect x="773" y="618" width="2" height="13" fill="#10b0a0"/>
<rect x="773" y="631" width="2" height="16" fill="#20c080"/>
<rect x="773" y="647" width="2" height="17" fill="#58dc48"/>
<rect x="773" y="664" width="2" height="12" fill="#c0f000"/>
<rect x="777" y="530" width="2" height="22" fill="#1828dc"/>
<rect x="777" y="664" width="2" height="12" fill="#c0f000"/>
<rect x="777" y="676" width="2" height="14" fill="url(#yo)"/>
<rect x="778" y="631" width="1" height="16" fill="#20c080"/>
<rect x="780" y="631" width="1" height="16" fill="#20c080"/>
<rect x="778" y="647" width="1" height="17" fill="#58dc48"/>
<rect x="780" y="647" width="1" height="17" fill="#58dc48"/>
<rect x="784" y="580" width="2" height="4" fill="#1870f0"/>
<rect x="784" y="647" width="2" height="17" fill="#58dc48"/>
<rect x="784" y="664" width="2" height="12" fill="#c0f000"/>
<rect x="784" y="676" width="2" height="14" fill="url(#yo)"/>
<rect x="788" y="584" width="1" height="22" fill="#1088e0"/>
<rect x="788" y="647" width="1" height="17" fill="#58dc48"/>
<rect x="790" y="647" width="1" height="17" fill="#58dc48"/>
<rect x="792" y="647" width="1" height="17" fill="#58dc48"/>
<rect x="796" y="618" width="1" height="13" fill="#10b0a0"/>
<rect x="796" y="631" width="1" height="16" fill="#20c080"/>
<rect x="800" y="580" width="1" height="4" fill="#1870f0"/>
<rect x="800" y="664" width="1" height="12" fill="#c0f000"/>
<rect x="801" y="530" width="1" height="22" fill="#1828dc"/>
<rect x="803" y="530" width="1" height="22" fill="#1828dc"/>
<rect x="801" y="676" width="3" height="14" fill="url(#yo)"/>
<rect x="803" y="569" width="1" height="11" fill="#1850f0"/>
<rect x="803" y="606" width="1" height="12" fill="#10a0c0"/>
<rect x="804" y="647" width="1" height="17" fill="#58dc48"/>
<rect x="806" y="647" width="1" height="17" fill="#58dc48"/>
<rect x="818" y="664" width="1" height="12" fill="#c0f000"/>
<rect x="818" y="676" width="1" height="14" fill="url(#yo)"/>
<rect x="822" y="513" width="1" height="9" fill="#1020c8"/>
<rect x="822" y="526" width="1" height="4" fill="#1838f0"/>
<rect x="826" y="631" width="1" height="16" fill="#20c080"/>
<rect x="833" y="618" width="1" height="13" fill="#10b0a0"/>
<rect x="833" y="631" width="1" height="16" fill="#20c080"/>
<rect x="838" y="606" width="2" height="12" fill="#10a0c0"/>
<rect x="845" y="513" width="2" height="9" fill="#1020c8"/>
<rect x="845" y="526" width="2" height="4" fill="#1838f0"/>
<rect x="916" y="530" width="1" height="22" fill="#1828dc"/>
<rect x="918" y="530" width="1" height="22" fill="#1828dc"/>
<rect x="919" y="513" width="1" height="9" fill="#1020c8"/>
<rect x="919" y="526" width="1" height="4" fill="#1838f0"/>
<rect x="919" y="530" width="1" height="22" fill="#1828dc"/>
<rect x="918" y="618" width="2" height="13" fill="#10b0a0"/>
<rect x="918" y="664" width="2" height="12" fill="#c0f000"/>
<rect x="920" y="584" width="1" height="22" fill="#1088e0"/>
<rect x="922" y="584" width="1" height="22" fill="#1088e0"/>
<rect x="919" y="676" width="7" height="14" fill="url(#yo)"/>
<rect x="922" y="631" width="1" height="16" fill="#20c080"/>
<rect x="923" y="569" width="1" height="11" fill="#1850f0"/>
<rect x="925" y="569" width="1" height="11" fill="#1850f0"/>
<rect x="926" y="513" width="2" height="9" fill="#1020c8"/>
<rect x="926" y="534" width="2" height="18" fill="#1828dc"/>
<rect x="927" y="580" width="1" height="4" fill="#1870f0"/>
<rect x="929" y="580" width="1" height="4" fill="#1870f0"/>
<rect x="931" y="580" width="1" height="4" fill="#1870f0"/>
<rect x="927" y="676" width="5" height="14" fill="url(#yo)"/>
<rect x="929" y="552" width="1" height="3" fill="#1838f0"/>
<rect x="930" y="664" width="4" height="12" fill="#c0f000"/>
<rect x="930" y="676" width="4" height="14" fill="url(#yo)"/>
<rect x="931" y="530" width="1" height="22" fill="#1828dc"/>
<rect x="933" y="530" width="1" height="22" fill="#1828dc"/>
<rect x="931" y="569" width="1" height="11" fill="#1850f0"/>
<rect x="933" y="569" width="1" height="11" fill="#1850f0"/>
<rect x="931" y="580" width="1" height="4" fill="#1870f0"/>
<rect x="933" y="580" width="1" height="4" fill="#1870f0"/>
<rect x="931" y="584" width="1" height="22" fill="#1088e0"/>
<rect x="933" y="584" width="1" height="22" fill="#1088e0"/>
<rect x="934" y="569" width="1" height="11" fill="#1850f0"/>
<rect x="936" y="569" width="1" height="11" fill="#1850f0"/>
<rect x="936" y="580" width="2" height="4" fill="#1870f0"/>
<rect x="936" y="584" width="2" height="22" fill="#1088e0"/>
<rect x="936" y="606" width="2" height="12" fill="#10a0c0"/>
<rect x="936" y="647" width="2" height="17" fill="#58dc48"/>
<rect x="936" y="664" width="2" height="12" fill="#c0f000"/>
<rect x="936" y="676" width="2" height="14" fill="url(#yo)"/>
<rect x="937" y="534" width="1" height="18" fill="#1828dc"/>
<rect x="939" y="534" width="1" height="18" fill="#1828dc"/>
<rect x="940" y="534" width="1" height="18" fill="#1828dc"/>
<rect x="937" y="552" width="1" height="3" fill="#1838f0"/>
<rect x="939" y="552" width="1" height="3" fill="#1838f0"/>
<rect x="940" y="552" width="1" height="3" fill="#1838f0"/>
<rect x="940" y="552" width="2" height="3" fill="#1838f0"/>
<rect x="940" y="555" width="2" height="14" fill="#1840f0"/>
<rect x="940" y="569" width="2" height="11" fill="#1850f0"/>
<rect x="940" y="631" width="2" height="16" fill="#20c080"/>
<rect x="941" y="530" width="1" height="22" fill="#1828dc"/>
<rect x="943" y="530" width="1" height="22" fill="#1828dc"/>
<rect x="942" y="580" width="2" height="4" fill="#1870f0"/>
<rect x="945" y="555" width="2" height="14" fill="#1840f0"/>
<rect x="945" y="676" width="2" height="14" fill="url(#yo)"/>
<rect x="946" y="513" width="1" height="9" fill="#1020c8"/>
<rect x="948" y="513" width="1" height="9" fill="#1020c8"/>
<rect x="946" y="526" width="1" height="4" fill="#1838f0"/>
<rect x="948" y="526" width="1" height="4" fill="#1838f0"/>
<rect x="949" y="530" width="1" height="22" fill="#1828dc"/>
<rect x="951" y="530" width="1" height="22" fill="#1828dc"/>
<rect x="951" y="676" width="5" height="14" fill="url(#yo)"/>
<rect x="952" y="584" width="1" height="22" fill="#1088e0"/>
<rect x="952" y="606" width="1" height="12" fill="#10a0c0"/>
<rect x="955" y="555" width="2" height="14" fill="#1840f0"/>
<rect x="956" y="618" width="2" height="13" fill="#10b0a0"/>
<rect x="956" y="569" width="2" height="11" fill="#1850f0"/>
<rect x="958" y="552" width="1" height="3" fill="#1838f0"/>
<rect x="960" y="552" width="1" height="3" fill="#1838f0"/>
<rect x="958" y="555" width="1" height="14" fill="#1840f0"/>
<rect x="960" y="555" width="1" height="14" fill="#1840f0"/>
<rect x="958" y="569" width="1" height="11" fill="#1850f0"/>
<rect x="960" y="569" width="1" height="11" fill="#1850f0"/>
<rect x="958" y="580" width="1" height="4" fill="#1870f0"/>
<rect x="960" y="580" width="1" height="4" fill="#1870f0"/>
<rect x="958" y="584" width="1" height="22" fill="#1088e0"/>
<rect x="960" y="584" width="1" height="22" fill="#1088e0"/>
<rect x="960" y="530" width="1" height="22" fill="#1828dc"/>
<rect x="962" y="530" width="1" height="22" fill="#1828dc"/>
<rect x="964" y="530" width="1" height="22" fill="#1828dc"/>
<rect x="963" y="676" width="2" height="14" fill="url(#yo)"/>
<rect x="964" y="618" width="1" height="13" fill="#10b0a0"/>
<rect x="966" y="618" width="1" height="13" fill="#10b0a0"/>
<rect x="966" y="676" width="1" height="14" fill="url(#yo)"/>
<rect x="967" y="552" width="1" height="3" fill="#1838f0"/>
<rect x="968" y="513" width="1" height="9" fill="#1020c8"/>
<rect x="970" y="513" width="1" height="9" fill="#1020c8"/>
<rect x="968" y="526" width="1" height="4" fill="#1838f0"/>
<rect x="970" y="526" width="1" height="4" fill="#1838f0"/>
<rect x="968" y="569" width="1" height="11" fill="#1850f0"/>
<rect x="970" y="569" width="1" height="11" fill="#1850f0"/>
<rect x="971" y="676" width="2" height="14" fill="url(#yo)"/>
<rect x="972" y="569" width="1" height="11" fill="#1850f0"/>
<rect x="974" y="569" width="1" height="11" fill="#1850f0"/>
<rect x="972" y="580" width="1" height="4" fill="#1870f0"/>
<rect x="974" y="580" width="1" height="4" fill="#1870f0"/>
<rect x="972" y="584" width="1" height="22" fill="#1088e0"/>
<rect x="974" y="584" width="1" height="22" fill="#1088e0"/>
<rect x="975" y="552" width="1" height="3" fill="#1838f0"/>
<rect x="977" y="552" width="1" height="3" fill="#1838f0"/>
<rect x="978" y="584" width="1" height="22" fill="#1088e0"/>
<rect x="978" y="676" width="4" height="14" fill="url(#yo)"/>
<rect x="979" y="534" width="2" height="18" fill="#1828dc"/>
<rect x="985" y="530" width="1" height="22" fill="#1828dc"/>
<rect x="987" y="530" width="1" height="22" fill="#1828dc"/>
<rect x="985" y="631" width="1" height="16" fill="#20c080"/>
<rect x="987" y="631" width="1" height="16" fill="#20c080"/>
<rect x="987" y="569" width="2" height="11" fill="#1850f0"/>
<rect x="989" y="526" width="2" height="4" fill="#1838f0"/>
<rect x="989" y="530" width="2" height="22" fill="#1828dc"/>
<rect x="989" y="555" width="2" height="14" fill="#1840f0"/>
<rect x="990" y="584" width="1" height="22" fill="#1088e0"/>
<rect x="992" y="584" width="1" height="22" fill="#1088e0"/>
<rect x="991" y="530" width="1" height="22" fill="#1828dc"/>
<rect x="993" y="530" width="1" height="22" fill="#1828dc"/>
<rect x="994" y="513" width="1" height="9" fill="#1020c8"/>
<rect x="996" y="513" width="1" height="9" fill="#1020c8"/>
<rect x="996" y="676" width="2" height="14" fill="url(#yo)"/>
<rect x="996" y="555" width="2" height="14" fill="#1840f0"/>
<rect x="1000" y="552" width="1" height="3" fill="#1838f0"/>
<rect x="1002" y="552" width="1" height="3" fill="#1838f0"/>
<rect x="1003" y="552" width="1" height="3" fill="#1838f0"/>
<rect x="1000" y="555" width="1" height="14" fill="#1840f0"/>
<rect x="1002" y="555" width="1" height="14" fill="#1840f0"/>
<rect x="1003" y="555" width="1" height="14" fill="#1840f0"/>
<rect x="1000" y="569" width="1" height="11" fill="#1850f0"/>
<rect x="1002" y="569" width="1" height="11" fill="#1850f0"/>
<rect x="1003" y="569" width="1" height="11" fill="#1850f0"/>
<rect x="1000" y="618" width="1" height="13" fill="#10b0a0"/>
<rect x="1002" y="618" width="1" height="13" fill="#10b0a0"/>
<rect x="1003" y="618" width="1" height="13" fill="#10b0a0"/>
<rect x="1000" y="631" width="1" height="16" fill="#20c080"/>
<rect x="1002" y="631" width="1" height="16" fill="#20c080"/>
<rect x="1003" y="631" width="1" height="16" fill="#20c080"/>
<rect x="1003" y="647" width="1" height="17" fill="#58dc48"/>
<rect x="1005" y="647" width="1" height="17" fill="#58dc48"/>
<rect x="1003" y="664" width="1" height="12" fill="#c0f000"/>
<rect x="1005" y="664" width="1" height="12" fill="#c0f000"/>
<rect x="1003" y="676" width="3" height="14" fill="url(#yo)"/>
<rect x="1003" y="530" width="1" height="22" fill="#1828dc"/>
<rect x="1005" y="530" width="1" height="22" fill="#1828dc"/>
<rect x="1001" y="552" width="1" height="3" fill="#1838f0"/>
<rect x="1003" y="552" width="1" height="3" fill="#1838f0"/>
<rect x="1001" y="555" width="1" height="14" fill="#1840f0"/>
<rect x="1003" y="555" width="1" height="14" fill="#1840f0"/>
<rect x="1001" y="569" width="1" height="11" fill="#1850f0"/>
<rect x="1003" y="569" width="1" height="11" fill="#1850f0"/>
<rect x="1001" y="580" width="1" height="4" fill="#1870f0"/>
<rect x="1003" y="580" width="1" height="4" fill="#1870f0"/>
<rect x="1001" y="618" width="1" height="13" fill="#10b0a0"/>
<rect x="1003" y="618" width="1" height="13" fill="#10b0a0"/>
<rect x="1001" y="631" width="1" height="16" fill="#20c080"/>
<rect x="1003" y="631" width="1" height="16" fill="#20c080"/>
<rect x="1003" y="526" width="2" height="4" fill="#1838f0"/>
<rect x="1004" y="647" width="2" height="17" fill="#58dc48"/>
<rect x="1004" y="664" width="2" height="12" fill="#c0f000"/>
<rect x="1004" y="676" width="2" height="14" fill="url(#yo)"/>
<rect x="1005" y="552" width="1" height="3" fill="#1838f0"/>
<rect x="1007" y="552" width="1" height="3" fill="#1838f0"/>
<rect x="1007" y="526" width="1" height="4" fill="#1838f0"/>
<rect x="1009" y="526" width="1" height="4" fill="#1838f0"/>
<rect x="1007" y="530" width="1" height="22" fill="#1828dc"/>
<rect x="1009" y="530" width="1" height="22" fill="#1828dc"/>
<rect x="1007" y="555" width="1" height="14" fill="#1840f0"/>
<rect x="1009" y="555" width="1" height="14" fill="#1840f0"/>
<rect x="1007" y="569" width="1" height="11" fill="#1850f0"/>
<rect x="1009" y="569" width="1" height="11" fill="#1850f0"/>
<rect x="1007" y="584" width="1" height="22" fill="#1088e0"/>
<rect x="1009" y="584" width="1" height="22" fill="#1088e0"/>
<rect x="1009" y="530" width="2" height="22" fill="#1828dc"/>
<rect x="1009" y="569" width="2" height="11" fill="#1850f0"/>
<rect x="1012" y="534" width="2" height="18" fill="#1828dc"/>
<rect x="1016" y="569" width="1" height="11" fill="#1850f0"/>
<rect x="1018" y="569" width="1" height="11" fill="#1850f0"/>
<rect x="1018" y="584" width="1" height="22" fill="#1088e0"/>
<rect x="1018" y="676" width="1" height="14" fill="url(#yo)"/>
<rect x="1019" y="555" width="2" height="14" fill="#1840f0"/>
<rect x="1019" y="664" width="2" height="12" fill="#c0f000"/>
<rect x="1019" y="676" width="2" height="14" fill="url(#yo)"/>
<rect x="1020" y="569" width="1" height="11" fill="#1850f0"/>
<rect x="1022" y="569" width="1" height="11" fill="#1850f0"/>
<rect x="1022" y="534" width="2" height="18" fill="#1828dc"/>
<rect x="1026" y="530" width="1" height="22" fill="#1828dc"/>
<rect x="1028" y="530" width="1" height="22" fill="#1828dc"/>
<rect x="1029" y="530" width="1" height="22" fill="#1828dc"/>
<rect x="1026" y="664" width="2" height="12" fill="#c0f000"/>
<rect x="1026" y="676" width="2" height="14" fill="url(#yo)"/>
<rect x="1029" y="555" width="2" height="14" fill="#1840f0"/>
<rect x="1029" y="584" width="2" height="22" fill="#1088e0"/>
<rect x="1029" y="606" width="2" height="12" fill="#10a0c0"/>
<rect x="1029" y="618" width="2" height="13" fill="#10b0a0"/>
<rect x="1030" y="676" width="2" height="14" fill="url(#yo)"/>
<rect x="1030" y="513" width="2" height="9" fill="#1020c8"/>
<rect x="1031" y="569" width="1" height="11" fill="#1850f0"/>
<rect x="1033" y="569" width="1" height="11" fill="#1850f0"/>
<rect x="1034" y="530" width="2" height="22" fill="#1828dc"/>
<rect x="1035" y="580" width="1" height="4" fill="#1870f0"/>
<rect x="1037" y="580" width="1" height="4" fill="#1870f0"/>
<rect x="1039" y="530" width="1" height="22" fill="#1828dc"/>
<rect x="1041" y="530" width="1" height="22" fill="#1828dc"/>
<rect x="1042" y="647" width="1" height="17" fill="#58dc48"/>
<rect x="1044" y="647" width="1" height="17" fill="#58dc48"/>
<rect x="1079" y="647" width="2" height="17" fill="#58dc48"/>
<linearGradient id="bigb" x1="0" y1="0" x2="0" y2="1"><stop offset="0" stop-color="#c0f008"/><stop offset="0.35" stop-color="#d8e800"/><stop offset="0.7" stop-color="#e8d000"/><stop offset="1" stop-color="#f0b000"/></linearGradient>
<linearGradient id="bigg" x1="0" y1="0" x2="0" y2="1"><stop offset="0" stop-color="#40d860" stop-opacity="0.9"/><stop offset="1" stop-color="#90e830" stop-opacity="0"/></linearGradient>
<rect x="395" y="664" width="41" height="26" fill="url(#bigb)"/>
<rect x="395" y="664" width="15" height="12" fill="url(#bigg)"/>
<rect x="399" y="664" width="2" height="3" fill="#40d060"/>
<rect x="91" y="686" width="4" height="1" fill="#2a2a2a"/>
<rect x="91" y="680" width="4" height="1" fill="#2a2a2a"/>
<rect x="91" y="675" width="4" height="1" fill="#2a2a2a"/>
<rect x="91" y="671" width="4" height="1" fill="#2a2a2a"/>
<rect x="91" y="667" width="4" height="1" fill="#2a2a2a"/>
<rect x="91" y="664" width="4" height="1" fill="#2a2a2a"/>
<rect x="91" y="661" width="4" height="1" fill="#2a2a2a"/>
<rect x="87" y="659" width="8" height="1" fill="#2a2a2a"/>
<rect x="91" y="643" width="4" height="1" fill="#2a2a2a"/>
<rect x="91" y="634" width="4" height="1" fill="#2a2a2a"/>
<rect x="91" y="627" width="4" height="1" fill="#2a2a2a"/>
<rect x="91" y="622" width="4" height="1" fill="#2a2a2a"/>
<rect x="91" y="618" width="4" height="1" fill="#2a2a2a"/>
<rect x="91" y="615" width="4" height="1" fill="#2a2a2a"/>
<rect x="91" y="611" width="4" height="1" fill="#2a2a2a"/>
<rect x="91" y="609" width="4" height="1" fill="#2a2a2a"/>
<rect x="87" y="606" width="8" height="1" fill="#2a2a2a"/>
<rect x="91" y="591" width="4" height="1" fill="#2a2a2a"/>
<rect x="91" y="581" width="4" height="1" fill="#2a2a2a"/>
<rect x="91" y="575" width="4" height="1" fill="#2a2a2a"/>
<rect x="91" y="570" width="4" height="1" fill="#2a2a2a"/>
<rect x="91" y="566" width="4" height="1" fill="#2a2a2a"/>
<rect x="91" y="562" width="4" height="1" fill="#2a2a2a"/>
<rect x="91" y="559" width="4" height="1" fill="#2a2a2a"/>
<rect x="91" y="556" width="4" height="1" fill="#2a2a2a"/>
<rect x="87" y="554" width="8" height="1" fill="#2a2a2a"/>
<rect x="91" y="538" width="4" height="1" fill="#2a2a2a"/>
<rect x="91" y="529" width="4" height="1" fill="#2a2a2a"/>
<rect x="91" y="522" width="4" height="1" fill="#2a2a2a"/>
<rect x="91" y="517" width="4" height="1" fill="#2a2a2a"/>
<text x="60.3" y="561.8" font-size="12.7" textLength="14" lengthAdjust="spacingAndGlyphs" fill="#3c3c3c">10</text>
<text x="75.8" y="555.8" font-size="12.7" textLength="6.8" lengthAdjust="spacingAndGlyphs" fill="#3c3c3c">4</text>
<text x="60.3" y="614.3" font-size="12.7" textLength="14" lengthAdjust="spacingAndGlyphs" fill="#3c3c3c">10</text>
<text x="75.8" y="608.3" font-size="12.7" textLength="6.8" lengthAdjust="spacingAndGlyphs" fill="#3c3c3c">3</text>
<text x="60.3" y="666.8" font-size="12.7" textLength="14" lengthAdjust="spacingAndGlyphs" fill="#3c3c3c">10</text>
<text x="75.8" y="660.8" font-size="12.7" textLength="6.8" lengthAdjust="spacingAndGlyphs" fill="#3c3c3c">2</text>
<text x="9.5" y="538.5" font-size="12.5" textLength="65" lengthAdjust="spacingAndGlyphs" fill="#3c3c3c">LEMMS Ions</text>
<text x="49" y="639" font-size="12.5" textLength="72" lengthAdjust="spacingAndGlyphs" transform="rotate(-90 49 639)" fill="#3c3c3c">Energy (keV)</text>
<rect x="1092" y="515" width="12" height="177" fill="url(#cm)"/>
<rect x="1104" y="514" width="1" height="178" fill="#2a2a2a"/>
<rect x="1105" y="690" width="5" height="1" fill="#2a2a2a"/>
<rect x="1105" y="671" width="8" height="1" fill="#2a2a2a"/>
<rect x="1105" y="651" width="5" height="1" fill="#2a2a2a"/>
<rect x="1105" y="632" width="8" height="1" fill="#2a2a2a"/>
<rect x="1105" y="612" width="5" height="1" fill="#2a2a2a"/>
<rect x="1105" y="593" width="8" height="1" fill="#2a2a2a"/>
<rect x="1105" y="573" width="5" height="1" fill="#2a2a2a"/>
<rect x="1105" y="554" width="8" height="1" fill="#2a2a2a"/>
<rect x="1105" y="534" width="5" height="1" fill="#2a2a2a"/>
<rect x="1105" y="514" width="8" height="1" fill="#2a2a2a"/>
<text x="1117.3" y="522.4" font-size="12.7" textLength="14" lengthAdjust="spacingAndGlyphs" fill="#3c3c3c">10</text>
<text x="1131.3" y="516.4" font-size="12.7" textLength="6.8" lengthAdjust="spacingAndGlyphs" fill="#3c3c3c">4</text>
<text x="1117.3" y="561.5" font-size="12.7" textLength="14" lengthAdjust="spacingAndGlyphs" fill="#3c3c3c">10</text>
<text x="1131.3" y="555.5" font-size="12.7" textLength="6.8" lengthAdjust="spacingAndGlyphs" fill="#3c3c3c">2</text>
<text x="1117.3" y="600.6" font-size="12.7" textLength="14" lengthAdjust="spacingAndGlyphs" fill="#3c3c3c">10</text>
<text x="1131.3" y="594.6" font-size="12.7" textLength="6.8" lengthAdjust="spacingAndGlyphs" fill="#3c3c3c">0</text>
<text x="1117.3" y="639.6999999999999" font-size="12.7" textLength="14" lengthAdjust="spacingAndGlyphs" fill="#3c3c3c">10</text>
<text x="1132.5" y="633.6999999999999" font-size="12.7" textLength="14.8" lengthAdjust="spacing" fill="#3c3c3c">&#8211;2</text>
<text x="1117.3" y="678.8" font-size="12.7" textLength="14" lengthAdjust="spacingAndGlyphs" fill="#3c3c3c">10</text>
<text x="1132.5" y="672.8" font-size="12.7" textLength="14.8" lengthAdjust="spacing" fill="#3c3c3c">&#8211;4</text>
<text x="1156" y="519" font-size="12.5" textLength="167" lengthAdjust="spacing" transform="rotate(90 1156 519)" fill="#3c3c3c">intensity 1/(s cm^2 ster keV)</text>
<rect x="136" y="219" width="1" height="2" fill="#505050"/>
<rect x="177" y="219" width="1" height="2" fill="#505050"/>
<rect x="218" y="217" width="1" height="4" fill="#505050"/>
<rect x="259" y="219" width="1" height="2" fill="#505050"/>
<rect x="300" y="219" width="1" height="2" fill="#505050"/>
<rect x="341" y="217" width="1" height="4" fill="#505050"/>
<rect x="382" y="219" width="1" height="2" fill="#505050"/>
<rect x="423" y="219" width="1" height="2" fill="#505050"/>
<rect x="464" y="217" width="1" height="4" fill="#505050"/>
<rect x="505" y="219" width="1" height="2" fill="#505050"/>
<rect x="546" y="219" width="1" height="2" fill="#505050"/>
<rect x="587" y="217" width="1" height="4" fill="#505050"/>
<rect x="628" y="219" width="1" height="2" fill="#505050"/>
<rect x="669" y="219" width="1" height="2" fill="#505050"/>
<rect x="710" y="217" width="1" height="4" fill="#505050"/>
<rect x="751" y="219" width="1" height="2" fill="#505050"/>
<rect x="792" y="219" width="1" height="2" fill="#505050"/>
<rect x="833" y="217" width="1" height="4" fill="#505050"/>
<rect x="874" y="219" width="1" height="2" fill="#505050"/>
<rect x="915" y="219" width="1" height="2" fill="#505050"/>
<rect x="956" y="217" width="1" height="4" fill="#505050"/>
<rect x="997" y="219" width="1" height="2" fill="#505050"/>
<rect x="1038" y="219" width="1" height="2" fill="#505050"/>
<rect x="136" y="415" width="1" height="2" fill="#505050"/>
<rect x="177" y="415" width="1" height="2" fill="#505050"/>
<rect x="218" y="413" width="1" height="4" fill="#505050"/>
<rect x="259" y="415" width="1" height="2" fill="#505050"/>
<rect x="300" y="415" width="1" height="2" fill="#505050"/>
<rect x="341" y="413" width="1" height="4" fill="#505050"/>
<rect x="382" y="415" width="1" height="2" fill="#505050"/>
<rect x="423" y="415" width="1" height="2" fill="#505050"/>
<rect x="464" y="413" width="1" height="4" fill="#505050"/>
<rect x="505" y="415" width="1" height="2" fill="#505050"/>
<rect x="546" y="415" width="1" height="2" fill="#505050"/>
<rect x="587" y="413" width="1" height="4" fill="#505050"/>
<rect x="628" y="415" width="1" height="2" fill="#505050"/>
<rect x="669" y="415" width="1" height="2" fill="#505050"/>
<rect x="710" y="413" width="1" height="4" fill="#505050"/>
<rect x="751" y="415" width="1" height="2" fill="#505050"/>
<rect x="792" y="415" width="1" height="2" fill="#505050"/>
<rect x="833" y="413" width="1" height="4" fill="#505050"/>
<rect x="874" y="415" width="1" height="2" fill="#505050"/>
<rect x="915" y="415" width="1" height="2" fill="#505050"/>
<rect x="956" y="413" width="1" height="4" fill="#505050"/>
<rect x="997" y="415" width="1" height="2" fill="#505050"/>
<rect x="1038" y="415" width="1" height="2" fill="#505050"/>
<rect x="136" y="507" width="1" height="2" fill="#2a2a2a"/>
<rect x="177" y="507" width="1" height="2" fill="#2a2a2a"/>
<rect x="218" y="505" width="1" height="4" fill="#2a2a2a"/>
<rect x="259" y="507" width="1" height="2" fill="#2a2a2a"/>
<rect x="300" y="507" width="1" height="2" fill="#2a2a2a"/>
<rect x="341" y="505" width="1" height="4" fill="#2a2a2a"/>
<rect x="382" y="507" width="1" height="2" fill="#2a2a2a"/>
<rect x="423" y="507" width="1" height="2" fill="#2a2a2a"/>
<rect x="464" y="505" width="1" height="4" fill="#2a2a2a"/>
<rect x="505" y="507" width="1" height="2" fill="#2a2a2a"/>
<rect x="546" y="507" width="1" height="2" fill="#2a2a2a"/>
<rect x="587" y="505" width="1" height="4" fill="#2a2a2a"/>
<rect x="628" y="507" width="1" height="2" fill="#2a2a2a"/>
<rect x="669" y="507" width="1" height="2" fill="#2a2a2a"/>
<rect x="710" y="505" width="1" height="4" fill="#2a2a2a"/>
<rect x="751" y="507" width="1" height="2" fill="#2a2a2a"/>
<rect x="792" y="507" width="1" height="2" fill="#2a2a2a"/>
<rect x="833" y="505" width="1" height="4" fill="#2a2a2a"/>
<rect x="874" y="507" width="1" height="2" fill="#2a2a2a"/>
<rect x="915" y="507" width="1" height="2" fill="#2a2a2a"/>
<rect x="956" y="505" width="1" height="4" fill="#2a2a2a"/>
<rect x="997" y="507" width="1" height="2" fill="#2a2a2a"/>
<rect x="1038" y="507" width="1" height="2" fill="#2a2a2a"/>
<rect x="136" y="689" width="1" height="2" fill="#505050"/>
<rect x="177" y="689" width="1" height="2" fill="#505050"/>
<rect x="218" y="687" width="1" height="4" fill="#505050"/>
<rect x="259" y="689" width="1" height="2" fill="#505050"/>
<rect x="300" y="689" width="1" height="2" fill="#505050"/>
<rect x="341" y="687" width="1" height="4" fill="#505050"/>
<rect x="382" y="689" width="1" height="2" fill="#505050"/>
<rect x="423" y="689" width="1" height="2" fill="#505050"/>
<rect x="464" y="687" width="1" height="4" fill="#505050"/>
<rect x="505" y="689" width="1" height="2" fill="#505050"/>
<rect x="546" y="689" width="1" height="2" fill="#505050"/>
<rect x="587" y="687" width="1" height="4" fill="#505050"/>
<rect x="628" y="689" width="1" height="2" fill="#505050"/>
<rect x="669" y="689" width="1" height="2" fill="#505050"/>
<rect x="710" y="687" width="1" height="4" fill="#505050"/>
<rect x="751" y="689" width="1" height="2" fill="#505050"/>
<rect x="792" y="689" width="1" height="2" fill="#505050"/>
<rect x="833" y="687" width="1" height="4" fill="#505050"/>
<rect x="874" y="689" width="1" height="2" fill="#505050"/>
<rect x="915" y="689" width="1" height="2" fill="#505050"/>
<rect x="956" y="687" width="1" height="4" fill="#505050"/>
<rect x="997" y="689" width="1" height="2" fill="#505050"/>
<rect x="1038" y="689" width="1" height="2" fill="#505050"/>
<rect x="95" y="695" width="986" height="16" fill="#2a2a2a"/>
<rect x="97" y="696" width="983" height="14" fill="#00ff00"/>
<text x="79" y="708" font-size="12.5" text-anchor="end" textLength="50" lengthAdjust="spacingAndGlyphs" fill="#3c3c3c">Sunlight?</text>
<rect x="136" y="711" width="1" height="4" fill="#2a2a2a"/>
<rect x="177" y="711" width="1" height="4" fill="#2a2a2a"/>
<rect x="218" y="711" width="1" height="8" fill="#2a2a2a"/>
<rect x="259" y="711" width="1" height="4" fill="#2a2a2a"/>
<rect x="300" y="711" width="1" height="4" fill="#2a2a2a"/>
<rect x="341" y="711" width="1" height="8" fill="#2a2a2a"/>
<rect x="382" y="711" width="1" height="4" fill="#2a2a2a"/>
<rect x="423" y="711" width="1" height="4" fill="#2a2a2a"/>
<rect x="464" y="711" width="1" height="8" fill="#2a2a2a"/>
<rect x="505" y="711" width="1" height="4" fill="#2a2a2a"/>
<rect x="546" y="711" width="1" height="4" fill="#2a2a2a"/>
<rect x="587" y="711" width="1" height="8" fill="#2a2a2a"/>
<rect x="628" y="711" width="1" height="4" fill="#2a2a2a"/>
<rect x="669" y="711" width="1" height="4" fill="#2a2a2a"/>
<rect x="710" y="711" width="1" height="8" fill="#2a2a2a"/>
<rect x="751" y="711" width="1" height="4" fill="#2a2a2a"/>
<rect x="792" y="711" width="1" height="4" fill="#2a2a2a"/>
<rect x="833" y="711" width="1" height="8" fill="#2a2a2a"/>
<rect x="874" y="711" width="1" height="4" fill="#2a2a2a"/>
<rect x="915" y="711" width="1" height="4" fill="#2a2a2a"/>
<rect x="956" y="711" width="1" height="8" fill="#2a2a2a"/>
<rect x="997" y="711" width="1" height="4" fill="#2a2a2a"/>
<rect x="1038" y="711" width="1" height="4" fill="#2a2a2a"/>
<rect x="1080" y="711" width="1" height="8" fill="#2a2a2a"/>
<text x="218.1" y="734" font-size="12.5" text-anchor="middle" textLength="34" lengthAdjust="spacing" fill="#3c3c3c">03:00</text>
<text x="218.1" y="749" font-size="12.5" text-anchor="middle" textLength="34" lengthAdjust="spacing" fill="#3c3c3c">16.06</text>
<text x="218.1" y="764" font-size="12.5" text-anchor="middle" textLength="34" lengthAdjust="spacing" fill="#3c3c3c">46.21</text>
<text x="218.1" y="779" font-size="12.5" text-anchor="middle" textLength="34" lengthAdjust="spacing" fill="#3c3c3c">78.14</text>
<text x="341.2" y="734" font-size="12.5" text-anchor="middle" textLength="34" lengthAdjust="spacing" fill="#3c3c3c">06:00</text>
<text x="341.2" y="749" font-size="12.5" text-anchor="middle" textLength="34" lengthAdjust="spacing" fill="#3c3c3c">16.09</text>
<text x="341.2" y="764" font-size="12.5" text-anchor="middle" textLength="34" lengthAdjust="spacing" fill="#3c3c3c">46.38</text>
<text x="341.2" y="779" font-size="12.5" text-anchor="middle" textLength="34" lengthAdjust="spacing" fill="#3c3c3c">78.62</text>
<text x="464.4" y="734" font-size="12.5" text-anchor="middle" textLength="34" lengthAdjust="spacing" fill="#3c3c3c">09:00</text>
<text x="464.4" y="749" font-size="12.5" text-anchor="middle" textLength="34" lengthAdjust="spacing" fill="#3c3c3c">16.12</text>
<text x="464.4" y="764" font-size="12.5" text-anchor="middle" textLength="34" lengthAdjust="spacing" fill="#3c3c3c">46.53</text>
<text x="464.4" y="779" font-size="12.5" text-anchor="middle" textLength="34" lengthAdjust="spacing" fill="#3c3c3c">79.08</text>
<text x="587.5" y="734" font-size="12.5" text-anchor="middle" textLength="34" lengthAdjust="spacing" fill="#3c3c3c">12:00</text>
<text x="587.5" y="749" font-size="12.5" text-anchor="middle" textLength="34" lengthAdjust="spacing" fill="#3c3c3c">16.15</text>
<text x="587.5" y="764" font-size="12.5" text-anchor="middle" textLength="34" lengthAdjust="spacing" fill="#3c3c3c">46.68</text>
<text x="587.5" y="779" font-size="12.5" text-anchor="middle" textLength="34" lengthAdjust="spacing" fill="#3c3c3c">79.52</text>
<text x="710.6" y="734" font-size="12.5" text-anchor="middle" textLength="34" lengthAdjust="spacing" fill="#3c3c3c">15:00</text>
<text x="710.6" y="749" font-size="12.5" text-anchor="middle" textLength="34" lengthAdjust="spacing" fill="#3c3c3c">16.18</text>
<text x="710.6" y="764" font-size="12.5" text-anchor="middle" textLength="34" lengthAdjust="spacing" fill="#3c3c3c">46.82</text>
<text x="710.6" y="779" font-size="12.5" text-anchor="middle" textLength="34" lengthAdjust="spacing" fill="#3c3c3c">79.95</text>
<text x="833.8" y="734" font-size="12.5" text-anchor="middle" textLength="34" lengthAdjust="spacing" fill="#3c3c3c">18:00</text>
<text x="833.8" y="749" font-size="12.5" text-anchor="middle" textLength="34" lengthAdjust="spacing" fill="#3c3c3c">16.21</text>
<text x="833.8" y="764" font-size="12.5" text-anchor="middle" textLength="34" lengthAdjust="spacing" fill="#3c3c3c">46.95</text>
<text x="833.8" y="779" font-size="12.5" text-anchor="middle" textLength="34" lengthAdjust="spacing" fill="#3c3c3c">80.36</text>
<text x="956.9" y="734" font-size="12.5" text-anchor="middle" textLength="34" lengthAdjust="spacing" fill="#3c3c3c">21:00</text>
<text x="956.9" y="749" font-size="12.5" text-anchor="middle" textLength="34" lengthAdjust="spacing" fill="#3c3c3c">16.24</text>
<text x="956.9" y="764" font-size="12.5" text-anchor="middle" textLength="34" lengthAdjust="spacing" fill="#3c3c3c">47.08</text>
<text x="956.9" y="779" font-size="12.5" text-anchor="middle" textLength="34" lengthAdjust="spacing" fill="#3c3c3c">80.76</text>
<text x="1080.0" y="734" font-size="12.5" text-anchor="middle" textLength="34" lengthAdjust="spacing" fill="#3c3c3c">00:00</text>
<text x="1080.0" y="749" font-size="12.5" text-anchor="middle" textLength="34" lengthAdjust="spacing" fill="#3c3c3c">16.27</text>
<text x="1080.0" y="764" font-size="12.5" text-anchor="middle" textLength="34" lengthAdjust="spacing" fill="#3c3c3c">47.19</text>
<text x="1080.0" y="779" font-size="12.5" text-anchor="middle" textLength="34" lengthAdjust="spacing" fill="#3c3c3c">81.14</text>
<text x="60" y="749" font-size="12.5" text-anchor="end" textLength="43" lengthAdjust="spacing" fill="#3c3c3c">LT (hrs)</text>
<text x="60" y="764" font-size="12.5" text-anchor="end" textLength="13" lengthAdjust="spacingAndGlyphs" fill="#3c3c3c">Rs</text>
<text x="60" y="779" font-size="12.5" text-anchor="end" textLength="46.5" lengthAdjust="spacing" fill="#3c3c3c">Dipole L</text>
<text x="60.3" y="71.80000000000001" font-size="12.7" textLength="14" lengthAdjust="spacingAndGlyphs" fill="#3c3c3c">10</text>
<text x="75.8" y="65.80000000000001" font-size="12.7" textLength="6.8" lengthAdjust="spacingAndGlyphs" fill="#3c3c3c">2</text>
<text x="60.3" y="168.3" font-size="12.7" textLength="14" lengthAdjust="spacingAndGlyphs" fill="#3c3c3c">10</text>
<text x="75.8" y="162.3" font-size="12.7" textLength="6.8" lengthAdjust="spacingAndGlyphs" fill="#3c3c3c">1</text>
<text x="49" y="161" font-size="12.5" textLength="72" lengthAdjust="spacingAndGlyphs" transform="rotate(-90 49 161)" fill="#3c3c3c">Energy (keV)</text>
<rect x="215.5" y="802.5" width="151" height="148" fill="none" stroke="#2a2a2a" stroke-width="1"/>
<rect x="366" y="951" width="1" height="4" fill="#2a2a2a"/>
<rect x="355" y="951" width="1" height="4" fill="#2a2a2a"/>
<rect x="344" y="951" width="1" height="4" fill="#2a2a2a"/>
<rect x="334" y="951" width="1" height="4" fill="#2a2a2a"/>
<rect x="323" y="951" width="1" height="4" fill="#2a2a2a"/>
<rect x="312" y="951" width="1" height="4" fill="#2a2a2a"/>
<rect x="301" y="951" width="1" height="4" fill="#2a2a2a"/>
<rect x="290" y="951" width="1" height="4" fill="#2a2a2a"/>
<rect x="280" y="951" width="1" height="4" fill="#2a2a2a"/>
<rect x="269" y="951" width="1" height="4" fill="#2a2a2a"/>
<rect x="258" y="951" width="1" height="4" fill="#2a2a2a"/>
<rect x="247" y="951" width="1" height="4" fill="#2a2a2a"/>
<rect x="237" y="951" width="1" height="4" fill="#2a2a2a"/>
<rect x="226" y="951" width="1" height="4" fill="#2a2a2a"/>
<rect x="215" y="951" width="1" height="4" fill="#2a2a2a"/>
<rect x="237" y="951" width="1" height="8" fill="#2a2a2a"/>
<rect x="290" y="951" width="1" height="8" fill="#2a2a2a"/>
<rect x="344" y="951" width="1" height="8" fill="#2a2a2a"/>
<text x="237.1" y="973" font-size="12.5" text-anchor="middle" textLength="17.6" lengthAdjust="spacing" fill="#3c3c3c">50.</text>
<text x="291.0" y="973" font-size="12.5" text-anchor="middle" textLength="10.6" lengthAdjust="spacing" fill="#3c3c3c">0.</text>
<text x="344.9" y="973" font-size="12.5" text-anchor="middle" textLength="23.2" lengthAdjust="spacingAndGlyphs" fill="#3c3c3c">&#8211;50.</text>
<rect x="211" y="802" width="4" height="1" fill="#2a2a2a"/>
<rect x="211" y="813" width="4" height="1" fill="#2a2a2a"/>
<rect x="211" y="823" width="4" height="1" fill="#2a2a2a"/>
<rect x="211" y="834" width="4" height="1" fill="#2a2a2a"/>
<rect x="211" y="844" width="4" height="1" fill="#2a2a2a"/>
<rect x="211" y="855" width="4" height="1" fill="#2a2a2a"/>
<rect x="211" y="865" width="4" height="1" fill="#2a2a2a"/>
<rect x="211" y="876" width="4" height="1" fill="#2a2a2a"/>
<rect x="211" y="887" width="4" height="1" fill="#2a2a2a"/>
<rect x="211" y="897" width="4" height="1" fill="#2a2a2a"/>
<rect x="211" y="908" width="4" height="1" fill="#2a2a2a"/>
<rect x="211" y="918" width="4" height="1" fill="#2a2a2a"/>
<rect x="211" y="929" width="4" height="1" fill="#2a2a2a"/>
<rect x="211" y="939" width="4" height="1" fill="#2a2a2a"/>
<rect x="211" y="950" width="4" height="1" fill="#2a2a2a"/>
<rect x="207" y="813" width="8" height="1" fill="#2a2a2a"/>
<rect x="207" y="834" width="8" height="1" fill="#2a2a2a"/>
<rect x="207" y="855" width="8" height="1" fill="#2a2a2a"/>
<rect x="207" y="876" width="8" height="1" fill="#2a2a2a"/>
<rect x="207" y="897" width="8" height="1" fill="#2a2a2a"/>
<rect x="207" y="918" width="8" height="1" fill="#2a2a2a"/>
<rect x="207" y="939" width="8" height="1" fill="#2a2a2a"/>
<text x="203" y="818" font-size="12.5" text-anchor="end" textLength="23.2" lengthAdjust="spacingAndGlyphs" fill="#3c3c3c">&#8211;60.</text>
<text x="203" y="839" font-size="12.5" text-anchor="end" textLength="23.2" lengthAdjust="spacingAndGlyphs" fill="#3c3c3c">&#8211;40.</text>
<text x="203" y="860" font-size="12.5" text-anchor="end" textLength="23.2" lengthAdjust="spacingAndGlyphs" fill="#3c3c3c">&#8211;20.</text>
<text x="203" y="881" font-size="12.5" text-anchor="end" textLength="10.6" lengthAdjust="spacing" fill="#3c3c3c">0.</text>
<text x="203" y="903" font-size="12.5" text-anchor="end" textLength="17.6" lengthAdjust="spacing" fill="#3c3c3c">20.</text>
<text x="203" y="924" font-size="12.5" text-anchor="end" textLength="17.6" lengthAdjust="spacing" fill="#3c3c3c">40.</text>
<text x="203" y="945" font-size="12.5" text-anchor="end" textLength="17.6" lengthAdjust="spacing" fill="#3c3c3c">60.</text>
<text x="291" y="992" font-size="12.5" text-anchor="middle" textLength="38" lengthAdjust="spacingAndGlyphs" fill="#3c3c3c">KSM&#8722;X</text>
<text x="166.5" y="876" font-size="12.5" text-anchor="middle" textLength="38" lengthAdjust="spacingAndGlyphs" transform="rotate(-90 166.5 876)" fill="#3c3c3c">KSM&#8722;Y</text>
<rect x="509.5" y="802.5" width="151" height="148" fill="none" stroke="#2a2a2a" stroke-width="1"/>
<rect x="660" y="951" width="1" height="4" fill="#2a2a2a"/>
<rect x="641" y="951" width="1" height="4" fill="#2a2a2a"/>
<rect x="622" y="951" width="1" height="4" fill="#2a2a2a"/>
<rect x="603" y="951" width="1" height="4" fill="#2a2a2a"/>
<rect x="584" y="951" width="1" height="4" fill="#2a2a2a"/>
<rect x="566" y="951" width="1" height="4" fill="#2a2a2a"/>
<rect x="547" y="951" width="1" height="4" fill="#2a2a2a"/>
<rect x="528" y="951" width="1" height="4" fill="#2a2a2a"/>
<rect x="509" y="951" width="1" height="4" fill="#2a2a2a"/>
<rect x="509" y="951" width="1" height="8" fill="#2a2a2a"/>
<rect x="547" y="951" width="1" height="8" fill="#2a2a2a"/>
<rect x="584" y="951" width="1" height="8" fill="#2a2a2a"/>
<rect x="622" y="951" width="1" height="8" fill="#2a2a2a"/>
<rect x="660" y="951" width="1" height="8" fill="#2a2a2a"/>
<text x="509.5" y="973" font-size="12.5" text-anchor="middle" textLength="17.6" lengthAdjust="spacing" fill="#3c3c3c">40.</text>
<text x="547.2" y="973" font-size="12.5" text-anchor="middle" textLength="17.6" lengthAdjust="spacing" fill="#3c3c3c">20.</text>
<text x="585.0" y="973" font-size="12.5" text-anchor="middle" textLength="10.6" lengthAdjust="spacing" fill="#3c3c3c">0.</text>
<text x="622.8" y="973" font-size="12.5" text-anchor="middle" textLength="23.2" lengthAdjust="spacingAndGlyphs" fill="#3c3c3c">&#8211;20.</text>
<text x="660.5" y="973" font-size="12.5" text-anchor="middle" textLength="23.2" lengthAdjust="spacingAndGlyphs" fill="#3c3c3c">&#8211;40.</text>
<rect x="505" y="950" width="4" height="1" fill="#2a2a2a"/>
<rect x="505" y="948" width="4" height="1" fill="#2a2a2a"/>
<rect x="505" y="946" width="4" height="1" fill="#2a2a2a"/>
<rect x="505" y="944" width="4" height="1" fill="#2a2a2a"/>
<rect x="505" y="943" width="4" height="1" fill="#2a2a2a"/>
<rect x="505" y="941" width="4" height="1" fill="#2a2a2a"/>
<rect x="505" y="939" width="4" height="1" fill="#2a2a2a"/>
<rect x="505" y="937" width="4" height="1" fill="#2a2a2a"/>
<rect x="505" y="935" width="4" height="1" fill="#2a2a2a"/>
<rect x="505" y="933" width="4" height="1" fill="#2a2a2a"/>
<rect x="505" y="932" width="4" height="1" fill="#2a2a2a"/>
<rect x="505" y="930" width="4" height="1" fill="#2a2a2a"/>
<rect x="505" y="928" width="4" height="1" fill="#2a2a2a"/>
<rect x="505" y="926" width="4" height="1" fill="#2a2a2a"/>
<rect x="505" y="924" width="4" height="1" fill="#2a2a2a"/>
<rect x="505" y="922" width="4" height="1" fill="#2a2a2a"/>
<rect x="505" y="920" width="4" height="1" fill="#2a2a2a"/>
<rect x="505" y="919" width="4" height="1" fill="#2a2a2a"/>
<rect x="505" y="917" width="4" height="1" fill="#2a2a2a"/>
<rect x="505" y="915" width="4" height="1" fill="#2a2a2a"/>
<rect x="505" y="913" width="4" height="1" fill="#2a2a2a"/>
<rect x="505" y="911" width="4" height="1" fill="#2a2a2a"/>
<rect x="505" y="909" width="4" height="1" fill="#2a2a2a"/>
<rect x="505" y="907" width="4" height="1" fill="#2a2a2a"/>
<rect x="505" y="906" width="4" height="1" fill="#2a2a2a"/>
<rect x="505" y="904" width="4" height="1" fill="#2a2a2a"/>
<rect x="505" y="902" width="4" height="1" fill="#2a2a2a"/>
<rect x="505" y="900" width="4" height="1" fill="#2a2a2a"/>
<rect x="505" y="898" width="4" height="1" fill="#2a2a2a"/>
<rect x="505" y="896" width="4" height="1" fill="#2a2a2a"/>
<rect x="505" y="894" width="4" height="1" fill="#2a2a2a"/>
<rect x="505" y="893" width="4" height="1" fill="#2a2a2a"/>
<rect x="505" y="891" width="4" height="1" fill="#2a2a2a"/>
<rect x="505" y="889" width="4" height="1" fill="#2a2a2a"/>
<rect x="505" y="887" width="4" height="1" fill="#2a2a2a"/>
<rect x="505" y="885" width="4" height="1" fill="#2a2a2a"/>
<rect x="505" y="883" width="4" height="1" fill="#2a2a2a"/>
<rect x="505" y="882" width="4" height="1" fill="#2a2a2a"/>
<rect x="505" y="880" width="4" height="1" fill="#2a2a2a"/>
<rect x="505" y="878" width="4" height="1" fill="#2a2a2a"/>
<rect x="505" y="876" width="4" height="1" fill="#2a2a2a"/>
<rect x="505" y="874" width="4" height="1" fill="#2a2a2a"/>
<rect x="505" y="872" width="4" height="1" fill="#2a2a2a"/>
<rect x="505" y="870" width="4" height="1" fill="#2a2a2a"/>
<rect x="505" y="869" width="4" height="1" fill="#2a2a2a"/>
<rect x="505" y="867" width="4" height="1" fill="#2a2a2a"/>
<rect x="505" y="865" width="4" height="1" fill="#2a2a2a"/>
<rect x="505" y="863" width="4" height="1" fill="#2a2a2a"/>
<rect x="505" y="861" width="4" height="1" fill="#2a2a2a"/>
<rect x="505" y="859" width="4" height="1" fill="#2a2a2a"/>
<rect x="505" y="858" width="4" height="1" fill="#2a2a2a"/>
<rect x="505" y="856" width="4" height="1" fill="#2a2a2a"/>
<rect x="505" y="854" width="4" height="1" fill="#2a2a2a"/>
<rect x="505" y="852" width="4" height="1" fill="#2a2a2a"/>
<rect x="505" y="850" width="4" height="1" fill="#2a2a2a"/>
<rect x="505" y="848" width="4" height="1" fill="#2a2a2a"/>
<rect x="505" y="846" width="4" height="1" fill="#2a2a2a"/>
<rect x="505" y="845" width="4" height="1" fill="#2a2a2a"/>
<rect x="505" y="843" width="4" height="1" fill="#2a2a2a"/>
<rect x="505" y="841" width="4" height="1" fill="#2a2a2a"/>
<rect x="505" y="839" width="4" height="1" fill="#2a2a2a"/>
<rect x="505" y="837" width="4" height="1" fill="#2a2a2a"/>
<rect x="505" y="835" width="4" height="1" fill="#2a2a2a"/>
<rect x="505" y="833" width="4" height="1" fill="#2a2a2a"/>
<rect x="505" y="832" width="4" height="1" fill="#2a2a2a"/>
<rect x="505" y="830" width="4" height="1" fill="#2a2a2a"/>
<rect x="505" y="828" width="4" height="1" fill="#2a2a2a"/>
<rect x="505" y="826" width="4" height="1" fill="#2a2a2a"/>
<rect x="505" y="824" width="4" height="1" fill="#2a2a2a"/>
<rect x="505" y="822" width="4" height="1" fill="#2a2a2a"/>
<rect x="505" y="820" width="4" height="1" fill="#2a2a2a"/>
<rect x="505" y="819" width="4" height="1" fill="#2a2a2a"/>
<rect x="505" y="817" width="4" height="1" fill="#2a2a2a"/>
<rect x="505" y="815" width="4" height="1" fill="#2a2a2a"/>
<rect x="505" y="813" width="4" height="1" fill="#2a2a2a"/>
<rect x="505" y="811" width="4" height="1" fill="#2a2a2a"/>
<rect x="505" y="809" width="4" height="1" fill="#2a2a2a"/>
<rect x="505" y="808" width="4" height="1" fill="#2a2a2a"/>
<rect x="505" y="806" width="4" height="1" fill="#2a2a2a"/>
<rect x="505" y="804" width="4" height="1" fill="#2a2a2a"/>
<rect x="505" y="802" width="4" height="1" fill="#2a2a2a"/>
<rect x="501" y="950" width="8" height="1" fill="#2a2a2a"/>
<rect x="501" y="932" width="8" height="1" fill="#2a2a2a"/>
<rect x="501" y="913" width="8" height="1" fill="#2a2a2a"/>
<rect x="501" y="894" width="8" height="1" fill="#2a2a2a"/>
<rect x="501" y="876" width="8" height="1" fill="#2a2a2a"/>
<rect x="501" y="858" width="8" height="1" fill="#2a2a2a"/>
<rect x="501" y="839" width="8" height="1" fill="#2a2a2a"/>
<rect x="501" y="820" width="8" height="1" fill="#2a2a2a"/>
<rect x="501" y="802" width="8" height="1" fill="#2a2a2a"/>
<text x="497" y="955" font-size="12.5" text-anchor="end" textLength="23.2" lengthAdjust="spacingAndGlyphs" fill="#3c3c3c">&#8211;40.</text>
<text x="497" y="937" font-size="12.5" text-anchor="end" textLength="23.2" lengthAdjust="spacingAndGlyphs" fill="#3c3c3c">&#8211;30.</text>
<text x="497" y="919" font-size="12.5" text-anchor="end" textLength="23.2" lengthAdjust="spacingAndGlyphs" fill="#3c3c3c">&#8211;20.</text>
<text x="497" y="900" font-size="12.5" text-anchor="end" textLength="23.2" lengthAdjust="spacingAndGlyphs" fill="#3c3c3c">&#8211;10.</text>
<text x="497" y="881" font-size="12.5" text-anchor="end" textLength="10.6" lengthAdjust="spacing" fill="#3c3c3c">0.</text>
<text x="497" y="863" font-size="12.5" text-anchor="end" textLength="17.6" lengthAdjust="spacing" fill="#3c3c3c">10.</text>
<text x="497" y="845" font-size="12.5" text-anchor="end" textLength="17.6" lengthAdjust="spacing" fill="#3c3c3c">20.</text>
<text x="497" y="826" font-size="12.5" text-anchor="end" textLength="17.6" lengthAdjust="spacing" fill="#3c3c3c">30.</text>
<text x="497" y="807" font-size="12.5" text-anchor="end" textLength="17.6" lengthAdjust="spacing" fill="#3c3c3c">40.</text>
<text x="585" y="992" font-size="12.5" text-anchor="middle" textLength="38" lengthAdjust="spacingAndGlyphs" fill="#3c3c3c">KSM&#8722;X</text>
<text x="460.5" y="876" font-size="12.5" text-anchor="middle" textLength="38" lengthAdjust="spacingAndGlyphs" transform="rotate(-90 460.5 876)" fill="#3c3c3c">KSM&#8722;Z</text>
<rect x="803.5" y="802.5" width="151" height="148" fill="none" stroke="#2a2a2a" stroke-width="1"/>
<rect x="803" y="951" width="1" height="4" fill="#2a2a2a"/>
<rect x="814" y="951" width="1" height="4" fill="#2a2a2a"/>
<rect x="825" y="951" width="1" height="4" fill="#2a2a2a"/>
<rect x="835" y="951" width="1" height="4" fill="#2a2a2a"/>
<rect x="846" y="951" width="1" height="4" fill="#2a2a2a"/>
<rect x="857" y="951" width="1" height="4" fill="#2a2a2a"/>
<rect x="868" y="951" width="1" height="4" fill="#2a2a2a"/>
<rect x="878" y="951" width="1" height="4" fill="#2a2a2a"/>
<rect x="889" y="951" width="1" height="4" fill="#2a2a2a"/>
<rect x="900" y="951" width="1" height="4" fill="#2a2a2a"/>
<rect x="911" y="951" width="1" height="4" fill="#2a2a2a"/>
<rect x="922" y="951" width="1" height="4" fill="#2a2a2a"/>
<rect x="932" y="951" width="1" height="4" fill="#2a2a2a"/>
<rect x="943" y="951" width="1" height="4" fill="#2a2a2a"/>
<rect x="954" y="951" width="1" height="4" fill="#2a2a2a"/>
<rect x="825" y="951" width="1" height="8" fill="#2a2a2a"/>
<rect x="878" y="951" width="1" height="8" fill="#2a2a2a"/>
<rect x="932" y="951" width="1" height="8" fill="#2a2a2a"/>
<text x="825.1" y="973" font-size="12.5" text-anchor="middle" textLength="23.2" lengthAdjust="spacingAndGlyphs" fill="#3c3c3c">&#8211;50.</text>
<text x="879.0" y="973" font-size="12.5" text-anchor="middle" textLength="10.6" lengthAdjust="spacing" fill="#3c3c3c">0.</text>
<text x="932.9" y="973" font-size="12.5" text-anchor="middle" textLength="17.6" lengthAdjust="spacing" fill="#3c3c3c">50.</text>
<rect x="799" y="950" width="4" height="1" fill="#2a2a2a"/>
<rect x="799" y="939" width="4" height="1" fill="#2a2a2a"/>
<rect x="799" y="929" width="4" height="1" fill="#2a2a2a"/>
<rect x="799" y="918" width="4" height="1" fill="#2a2a2a"/>
<rect x="799" y="908" width="4" height="1" fill="#2a2a2a"/>
<rect x="799" y="897" width="4" height="1" fill="#2a2a2a"/>
<rect x="799" y="887" width="4" height="1" fill="#2a2a2a"/>
<rect x="799" y="876" width="4" height="1" fill="#2a2a2a"/>
<rect x="799" y="865" width="4" height="1" fill="#2a2a2a"/>
<rect x="799" y="855" width="4" height="1" fill="#2a2a2a"/>
<rect x="799" y="844" width="4" height="1" fill="#2a2a2a"/>
<rect x="799" y="834" width="4" height="1" fill="#2a2a2a"/>
<rect x="799" y="823" width="4" height="1" fill="#2a2a2a"/>
<rect x="799" y="813" width="4" height="1" fill="#2a2a2a"/>
<rect x="799" y="802" width="4" height="1" fill="#2a2a2a"/>
<rect x="795" y="939" width="8" height="1" fill="#2a2a2a"/>
<rect x="795" y="918" width="8" height="1" fill="#2a2a2a"/>
<rect x="795" y="897" width="8" height="1" fill="#2a2a2a"/>
<rect x="795" y="876" width="8" height="1" fill="#2a2a2a"/>
<rect x="795" y="855" width="8" height="1" fill="#2a2a2a"/>
<rect x="795" y="834" width="8" height="1" fill="#2a2a2a"/>
<rect x="795" y="813" width="8" height="1" fill="#2a2a2a"/>
<text x="791" y="945" font-size="12.5" text-anchor="end" textLength="23.2" lengthAdjust="spacingAndGlyphs" fill="#3c3c3c">&#8211;60.</text>
<text x="791" y="924" font-size="12.5" text-anchor="end" textLength="23.2" lengthAdjust="spacingAndGlyphs" fill="#3c3c3c">&#8211;40.</text>
<text x="791" y="903" font-size="12.5" text-anchor="end" textLength="23.2" lengthAdjust="spacingAndGlyphs" fill="#3c3c3c">&#8211;20.</text>
<text x="791" y="881" font-size="12.5" text-anchor="end" textLength="10.6" lengthAdjust="spacing" fill="#3c3c3c">0.</text>
<text x="791" y="860" font-size="12.5" text-anchor="end" textLength="17.6" lengthAdjust="spacing" fill="#3c3c3c">20.</text>
<text x="791" y="839" font-size="12.5" text-anchor="end" textLength="17.6" lengthAdjust="spacing" fill="#3c3c3c">40.</text>
<text x="791" y="818" font-size="12.5" text-anchor="end" textLength="17.6" lengthAdjust="spacing" fill="#3c3c3c">60.</text>
<text x="879" y="992" font-size="12.5" text-anchor="middle" textLength="38" lengthAdjust="spacingAndGlyphs" fill="#3c3c3c">KSM&#8722;Y</text>
<text x="754.5" y="876" font-size="12.5" text-anchor="middle" textLength="38" lengthAdjust="spacingAndGlyphs" transform="rotate(-90 754.5 876)" fill="#3c3c3c">KSM&#8722;Z</text>
<clipPath id="c1"><rect x="216" y="803" width="150" height="147"/></clipPath>
<clipPath id="c2"><rect x="510" y="803" width="150" height="147"/></clipPath>
<clipPath id="c3"><rect x="804" y="803" width="150" height="147"/></clipPath>
<g clip-path="url(#c1)">
<polyline points="300.5,800.0 300.4,800.3 300.3,800.5 300.1,800.9 299.8,801.4 299.3,802.1 298.3,803.0 296.8,804.2 294.9,805.7 292.7,807.3 290.4,809.0 288.2,810.7 286.4,812.2 284.9,813.5 283.5,814.8 282.3,816.0 281.2,817.2 280.0,818.5 278.8,819.8 277.5,821.2 276.3,822.7 275.0,824.2 273.7,825.7 272.5,827.3 271.2,828.9 269.9,830.6 268.6,832.3 267.3,834.0 266.0,835.8 264.8,837.6 263.6,839.5 262.5,841.4 261.4,843.4 260.4,845.4 259.4,847.5 258.5,849.6 257.6,851.7 256.8,853.9 256.1,856.2 255.4,858.5 254.8,860.8 254.2,863.1 253.8,865.4 253.5,867.7 253.2,870.0 253.1,872.3 253.0,874.6 252.9,876.8 253.0,879.0 253.1,881.1 253.3,883.2 253.6,885.2 253.9,887.2 254.3,889.2 254.8,891.2 255.4,893.3 256.0,895.3 256.7,897.4 257.4,899.5 258.3,901.5 259.1,903.4 260.0,905.3 260.9,907.1 261.9,908.8 263.0,910.5 264.1,912.3 265.2,914.0 266.4,915.8 267.6,917.6 268.9,919.4 270.2,921.2 271.5,922.9 272.8,924.6 274.1,926.2 275.3,927.8 276.6,929.3 277.9,930.8 279.1,932.3 280.4,933.8 281.7,935.3 282.9,936.9 284.2,938.5 285.4,940.0 286.7,941.5 288.0,942.9 289.4,944.2 291.0,945.5 292.5,946.7 294.0,947.9 295.3,948.9 296.3,949.7 297.0,950.4 297.4,950.9 297.7,951.3 297.8,951.6 297.9,951.8 298.0,952.0" fill="none" stroke="#0000ff" stroke-width="1.05" stroke-dasharray="2.6 1.7" shape-rendering="geometricPrecision" stroke-linejoin="round"/>
<polyline points="358.0,801.0 357.6,801.2 357.2,801.4 356.7,801.6 355.9,802.0 354.8,802.4 353.3,803.0 351.2,803.8 348.6,804.7 345.6,805.8 342.5,806.9 339.4,808.0 336.6,809.1 334.0,810.1 331.4,811.1 328.9,812.1 326.4,813.1 323.9,814.1 321.4,815.2 318.9,816.4 316.3,817.6 313.8,818.8 311.3,820.1 308.7,821.4 306.2,822.8 303.6,824.2 301.0,825.7 298.4,827.3 295.8,828.8 293.4,830.4 291.0,831.9 288.8,833.4 286.6,834.9 284.5,836.4 282.5,837.8 280.6,839.4 278.8,841.0 277.1,842.7 275.4,844.5 273.8,846.4 272.3,848.2 270.9,850.0 269.7,851.7 268.7,853.3 267.8,854.8 267.0,856.3 266.3,857.7 265.7,859.2 265.2,860.8 264.7,862.5 264.3,864.2 263.9,866.0 263.7,867.8 263.5,869.6 263.3,871.4 263.2,873.2 263.1,875.0 263.1,876.8 263.2,878.5 263.4,880.3 263.6,882.1 263.9,883.9 264.3,885.6 264.8,887.4 265.3,889.2 266.0,890.9 266.7,892.7 267.5,894.5 268.4,896.3 269.4,898.1 270.4,899.8 271.6,901.6 272.8,903.4 274.1,905.2 275.5,907.0 277.0,908.8 278.5,910.6 280.2,912.3 281.9,914.0 283.7,915.6 285.6,917.2 287.6,918.7 289.6,920.2 291.8,921.7 294.0,923.1 296.3,924.5 298.7,925.7 301.2,927.0 303.8,928.2 306.5,929.5 309.2,930.7 312.0,931.9 314.8,933.1 317.8,934.3 320.8,935.5 324.1,936.8 327.5,938.3 331.4,940.1 335.9,942.2 340.5,944.3 345.0,946.4 348.8,948.3 351.8,949.7 353.7,950.6 354.8,951.2 355.4,951.6 355.7,951.7 355.8,951.9 356.0,952.0" fill="none" stroke="#6a3808" stroke-width="1.05" stroke-dasharray="2.6 1.7" shape-rendering="geometricPrecision" stroke-linejoin="round"/>
<ellipse cx="292" cy="877.4" rx="21" ry="21.1" fill="none" stroke="#000" stroke-width="1.4" shape-rendering="geometricPrecision"/>
<circle cx="291.5" cy="877" r="1.2" fill="none" stroke="#000" stroke-width="0.8" shape-rendering="geometricPrecision"/>
<circle cx="271.5" cy="882.4" r="2.7" fill="#ff0000" shape-rendering="geometricPrecision"/>
<polyline points="268.6,904.0 268.6,905.1 268.6,906.7 268.7,908.4 268.8,910.0 269.0,911.3 269.3,912.6 269.7,913.8 270.2,915.0 270.8,916.1 271.4,917.1 272.2,918.1 273.0,919.0 273.9,919.8 274.9,920.6 276.0,921.3 277.0,921.8 278.0,922.2 279.1,922.4 280.1,922.5 281.0,922.6 281.9,922.6 282.7,922.6 283.5,922.5 284.0,922.3 284.3,922.0 284.3,921.6 284.2,921.3 284.2,921.0" fill="none" stroke="#000" stroke-width="1.3" shape-rendering="geometricPrecision" stroke-linejoin="round"/>
<circle cx="274" cy="919.8" r="3" fill="#0000ff" shape-rendering="geometricPrecision"/>
<path d="M268.3,913.9 L276.9,922.5 M268.3,922.5 L276.9,913.9" stroke="#ff3030" stroke-width="1.1" shape-rendering="geometricPrecision"/>
</g>
<g clip-path="url(#c2)">
<polyline points="544.5,800.0 544.4,800.3 544.4,800.5 544.3,800.9 544.1,801.4 543.8,802.1 543.2,803.0 542.4,804.1 541.4,805.4 540.2,806.8 538.9,808.5 537.6,810.2 536.4,812.2 535.2,814.4 533.9,816.7 532.6,819.2 531.3,821.9 530.0,824.6 528.8,827.4 527.7,830.3 526.6,833.2 525.5,836.3 524.5,839.4 523.5,842.5 522.7,845.6 521.9,848.7 521.3,851.9 520.6,855.1 520.1,858.2 519.7,861.1 519.3,863.8 519.0,866.1 518.9,868.2 518.8,870.1 518.8,871.9 518.9,873.9 518.9,876.0 518.9,878.3 518.9,880.7 519.0,883.2 519.1,885.8 519.3,888.5 519.6,891.2 520.0,894.1 520.5,897.0 521.1,900.1 521.8,903.2 522.6,906.3 523.4,909.4 524.4,912.5 525.5,915.7 526.7,918.8 527.9,921.9 529.1,924.9 530.3,927.7 531.5,930.3 532.6,932.8 533.8,935.2 534.9,937.4 536.1,939.5 537.1,941.4 538.1,943.2 539.1,944.8 540.1,946.3 541.0,947.6 541.8,948.7 542.4,949.7 542.8,950.5 543.1,951.0 543.3,951.4 543.4,951.6 543.4,951.8 543.5,952.0" fill="none" stroke="#0000ff" stroke-width="1.05" stroke-dasharray="2.6 1.7" shape-rendering="geometricPrecision" stroke-linejoin="round"/>
<polyline points="579.0,801.0 578.8,801.2 578.7,801.5 578.4,801.9 578.0,802.3 577.5,803.0 576.6,803.8 575.4,804.8 574.0,805.9 572.4,807.2 570.6,808.7 568.7,810.3 566.8,812.2 564.7,814.3 562.4,816.7 560.0,819.2 557.6,821.9 555.3,824.6 553.1,827.4 551.1,830.3 549.1,833.2 547.2,836.3 545.5,839.4 543.8,842.5 542.4,845.6 541.2,848.7 540.1,851.9 539.1,855.1 538.3,858.2 537.7,861.1 537.1,863.8 536.7,866.1 536.4,868.1 536.3,869.9 536.3,871.7 536.3,873.7 536.4,876.0 536.5,878.7 536.6,881.7 536.7,884.9 537.0,888.1 537.4,891.3 537.9,894.2 538.6,896.9 539.5,899.5 540.5,902.0 541.6,904.4 542.8,906.9 544.0,909.4 545.3,912.0 546.7,914.5 548.2,917.1 549.7,919.6 551.4,922.2 553.1,924.6 555.0,927.0 556.9,929.4 559.0,931.7 561.1,934.0 563.2,936.2 565.2,938.3 567.2,940.3 569.4,942.4 571.5,944.3 573.5,946.1 575.2,947.7 576.6,949.0 577.5,950.0 578.2,950.7 578.5,951.2 578.7,951.5 578.8,951.8 579.0,952.0" fill="none" stroke="#6a3808" stroke-width="1.05" stroke-dasharray="2.6 1.7" shape-rendering="geometricPrecision" stroke-linejoin="round"/>
<line x1="550" y1="886" x2="623.8" y2="867.2" stroke="#000" stroke-width="1.8" shape-rendering="geometricPrecision"/>
<circle cx="585" cy="876.8" r="1.3" fill="none" stroke="#555" stroke-width="0.9" shape-rendering="geometricPrecision"/>
<circle cx="550" cy="885.9" r="2.6" fill="#ff0000" shape-rendering="geometricPrecision"/>
<polyline points="544.3,897.3 545.5,897.5 545.7,900.3 550.0,904.9 555.0,906.2 572.8,906.2" fill="none" stroke="#000" stroke-width="1.4" shape-rendering="geometricPrecision" stroke-linejoin="round"/>
<circle cx="554.6" cy="905.6" r="2.9" fill="#0000ff" shape-rendering="geometricPrecision"/>
<path d="M547.8,900.1 L556.8,909.1 M547.8,909.1 L556.8,900.1" stroke="#ff3030" stroke-width="1.1" shape-rendering="geometricPrecision"/>
</g>
<g clip-path="url(#c3)">
<ellipse cx="879" cy="876.3" rx="51.7" ry="50.2" fill="none" stroke="#0000ff" stroke-width="1.05" stroke-dasharray="2.6 1.7" shape-rendering="geometricPrecision"/>
<ellipse cx="879" cy="876.5" rx="28.9" ry="28.1" fill="none" stroke="#6a3808" stroke-width="1.05" stroke-dasharray="2.6 1.7" shape-rendering="geometricPrecision"/>
<ellipse cx="879.9" cy="876.8" rx="21.9" ry="5.7" fill="none" stroke="#000" stroke-width="1.4" shape-rendering="geometricPrecision"/>
<circle cx="879" cy="876.8" r="1.1" fill="none" stroke="#000" stroke-width="0.8" shape-rendering="geometricPrecision"/>
<circle cx="885.1" cy="882.1" r="2.6" fill="#ff0000" shape-rendering="geometricPrecision"/>
<line x1="907.9" y1="888.6" x2="926.9" y2="894.2" stroke="#000" stroke-width="1.3" shape-rendering="geometricPrecision"/>
<path d="M917.1,887.8 L926.1,896.8 M917.1,896.8 L926.1,887.8" stroke="#ff3030" stroke-width="1.1" shape-rendering="geometricPrecision"/>
<path d="M920.5,890 L927.5,894 L925,897 L919,894 Z" fill="#0000dd" shape-rendering="geometricPrecision"/>
</g>
</svg></body></html>
